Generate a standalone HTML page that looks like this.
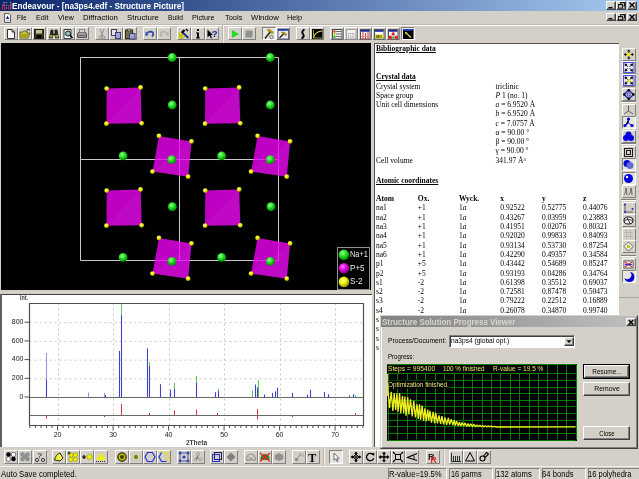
<!DOCTYPE html><html><head><meta charset="utf-8"><style>
html,body{margin:0;padding:0;width:639px;height:479px;overflow:hidden;background:#D4D0C8;position:relative;font-family:"Liberation Sans",sans-serif}
div,svg{position:absolute}
</style></head><body><div style="position:absolute;left:0;top:0;width:639px;height:479px;overflow:hidden;will-change:transform">
<div style="position:absolute;left:0px;top:0px;width:639px;height:11px;background:linear-gradient(to right,#0A246A,#A6CAF0);"></div>
<svg style="position:absolute;left:1px;top:0px" width="11" height="11" viewBox="0 0 11 11"><path d="M1.5 10 V4 M3.5 10 V2 M7.5 10 V5 M10 10 V3" stroke="#D02030" stroke-width="1"/><g fill="#40B0E0"><circle cx="2.8" cy="2.5" r="0.7"/><circle cx="5.5" cy="2.5" r="0.7"/><circle cx="9.5" cy="2.5" r="0.7"/><circle cx="2.8" cy="5.3" r="0.7"/><circle cx="5.5" cy="5.3" r="0.7"/><circle cx="9.5" cy="5.3" r="0.7"/><circle cx="5.5" cy="8" r="0.7"/><circle cx="9.5" cy="8" r="0.7"/></g></svg>
<div style="position:absolute;left:12.30px;top:1.14px;font-family:'Liberation Sans';font-size:8.4px;line-height:10.50px;font-weight:bold;color:#fff;white-space:nowrap;transform:scaleX(0.980);transform-origin:0 50%;">Endeavour - [na3ps4.edf - Structure Picture]</div>
<div style="position:absolute;left:606px;top:1px;width:9.5px;height:9px;background:#D4D0C8;box-sizing:border-box;border-top:1px solid #fff;border-left:1px solid #fff;border-right:1px solid #404040;border-bottom:1px solid #404040;box-shadow:inset -1px -1px 0 #808080;"></div>
<div style="position:absolute;left:615.5px;top:1px;width:10px;height:9px;background:#D4D0C8;box-sizing:border-box;border-top:1px solid #fff;border-left:1px solid #fff;border-right:1px solid #404040;border-bottom:1px solid #404040;box-shadow:inset -1px -1px 0 #808080;"></div>
<div style="position:absolute;left:627px;top:1px;width:10px;height:9px;background:#D4D0C8;box-sizing:border-box;border-top:1px solid #fff;border-left:1px solid #fff;border-right:1px solid #404040;border-bottom:1px solid #404040;box-shadow:inset -1px -1px 0 #808080;"></div>
<svg style="position:absolute;left:606px;top:1px" width="10" height="9" viewBox="0 0 10 9"><rect x="2.5" y="6" width="4" height="1.3" fill="#000"/></svg>
<svg style="position:absolute;left:615.5px;top:1px" width="10" height="9" viewBox="0 0 10 9"><path d="M4.5 3 V1.5 H8.5 V5 H7" fill="none" stroke="#000" stroke-width="0.8"/><rect x="2.5" y="3.5" width="4" height="3.5" fill="none" stroke="#000" stroke-width="0.8"/><path d="M2.5 3.8 H6.5 M4.5 1.8 H8.5" stroke="#000" stroke-width="0.8"/></svg>
<svg style="position:absolute;left:627px;top:1px" width="10" height="9" viewBox="0 0 10 9"><path d="M2.5 1.5 L7.5 6.5 M7.5 1.5 L2.5 6.5" stroke="#000" stroke-width="1.25"/></svg>
<svg style="position:absolute;left:3px;top:12px" width="9" height="12" viewBox="0 0 9 12"><path d="M1.5 1.5 H6 L7.5 3 V10.5 H1.5 Z" fill="#F4F4F4" stroke="#505050" stroke-width="0.9"/><path d="M2.8 7 L4.5 3.8 L6.2 7 Z" fill="#1020A0"/><rect x="2.5" y="8" width="4" height="1.5" fill="#C8C8D0"/></svg>
<div style="position:absolute;left:17.10px;top:12.53px;font-family:'Liberation Sans';font-size:8px;line-height:10.00px;font-weight:normal;color:#000;white-space:nowrap;transform:scaleX(0.729);transform-origin:0 50%;">File</div>
<div style="position:absolute;left:35.90px;top:12.53px;font-family:'Liberation Sans';font-size:8px;line-height:10.00px;font-weight:normal;color:#000;white-space:nowrap;transform:scaleX(0.913);transform-origin:0 50%;">Edit</div>
<div style="position:absolute;left:57.90px;top:12.53px;font-family:'Liberation Sans';font-size:8px;line-height:10.00px;font-weight:normal;color:#000;white-space:nowrap;transform:scaleX(0.924);transform-origin:0 50%;">View</div>
<div style="position:absolute;left:83.20px;top:12.53px;font-family:'Liberation Sans';font-size:8px;line-height:10.00px;font-weight:normal;color:#000;white-space:nowrap;transform:scaleX(0.970);transform-origin:0 50%;">Diffraction</div>
<div style="position:absolute;left:126.60px;top:12.53px;font-family:'Liberation Sans';font-size:8px;line-height:10.00px;font-weight:normal;color:#000;white-space:nowrap;transform:scaleX(0.982);transform-origin:0 50%;">Structure</div>
<div style="position:absolute;left:167.90px;top:12.53px;font-family:'Liberation Sans';font-size:8px;line-height:10.00px;font-weight:normal;color:#000;white-space:nowrap;transform:scaleX(0.843);transform-origin:0 50%;">Build</div>
<div style="position:absolute;left:192.30px;top:12.53px;font-family:'Liberation Sans';font-size:8px;line-height:10.00px;font-weight:normal;color:#000;white-space:nowrap;transform:scaleX(0.903);transform-origin:0 50%;">Picture</div>
<div style="position:absolute;left:224.80px;top:12.53px;font-family:'Liberation Sans';font-size:8px;line-height:10.00px;font-weight:normal;color:#000;white-space:nowrap;transform:scaleX(0.931);transform-origin:0 50%;">Tools</div>
<div style="position:absolute;left:251.00px;top:12.53px;font-family:'Liberation Sans';font-size:8px;line-height:10.00px;font-weight:normal;color:#000;white-space:nowrap;transform:scaleX(0.977);transform-origin:0 50%;">Window</div>
<div style="position:absolute;left:287.30px;top:12.53px;font-family:'Liberation Sans';font-size:8px;line-height:10.00px;font-weight:normal;color:#000;white-space:nowrap;transform:scaleX(0.912);transform-origin:0 50%;">Help</div>
<div style="position:absolute;left:606px;top:13px;width:9.5px;height:8px;background:#D4D0C8;box-sizing:border-box;border-top:1px solid #fff;border-left:1px solid #fff;border-right:1px solid #404040;border-bottom:1px solid #404040;box-shadow:inset -1px -1px 0 #808080;"></div>
<div style="position:absolute;left:615.5px;top:13px;width:10px;height:8px;background:#D4D0C8;box-sizing:border-box;border-top:1px solid #fff;border-left:1px solid #fff;border-right:1px solid #404040;border-bottom:1px solid #404040;box-shadow:inset -1px -1px 0 #808080;"></div>
<div style="position:absolute;left:627px;top:13px;width:10px;height:8px;background:#D4D0C8;box-sizing:border-box;border-top:1px solid #fff;border-left:1px solid #fff;border-right:1px solid #404040;border-bottom:1px solid #404040;box-shadow:inset -1px -1px 0 #808080;"></div>
<svg style="position:absolute;left:606px;top:13px" width="10" height="8" viewBox="0 0 10 8"><rect x="2.5" y="5" width="4" height="1.3" fill="#000"/></svg>
<svg style="position:absolute;left:615.5px;top:13px" width="10" height="8" viewBox="0 0 10 8"><path d="M4.5 3 V1.5 H8.5 V5 H7" fill="none" stroke="#000" stroke-width="0.8"/><rect x="2.5" y="3.5" width="4" height="3.5" fill="none" stroke="#000" stroke-width="0.8"/><path d="M2.5 3.8 H6.5 M4.5 1.8 H8.5" stroke="#000" stroke-width="0.8"/></svg>
<svg style="position:absolute;left:627px;top:13px" width="10" height="8" viewBox="0 0 10 8"><path d="M2.5 1.5 L7.5 6.5 M7.5 1.5 L2.5 6.5" stroke="#000" stroke-width="1.25"/></svg>
<div style="position:absolute;left:0px;top:24px;width:639px;height:1px;background:#BCB8B0;"></div>
<div style="position:absolute;left:0px;top:25px;width:639px;height:1px;background:#fff;"></div>
<div style="position:absolute;left:1px;top:43px;width:370px;height:247px;background:#000;"></div>
<div style="position:absolute;left:0px;top:294px;width:372px;height:153px;background:#fff;"></div>
<div style="position:absolute;left:0px;top:294px;width:372px;height:1px;background:#404040;"></div>
<div style="position:absolute;left:0px;top:294px;width:2px;height:153px;background:#606060;"></div>
<div style="position:absolute;left:375px;top:44px;width:244px;height:403px;background:#fff;"></div>
<div style="position:absolute;left:374px;top:43px;width:1px;height:404px;background:#505050;"></div>
<div style="position:absolute;left:374px;top:43px;width:245px;height:1px;background:#505050;"></div>
<div style="position:absolute;left:4px;top:27px;width:14px;height:13px;background:#D4D0C8;box-sizing:border-box;border-top:1px solid #fff;border-left:1px solid #fff;border-right:1px solid #808080;border-bottom:1px solid #808080;"></div>
<svg style="position:absolute;left:4px;top:27px" width="14" height="13" viewBox="0 0 14 13"><path d="M3.5 2.5 H8 L10.5 5 V11.5 H3.5 Z" fill="#fff" stroke="#303030"/><path d="M8 2.5 V5 H10.5" fill="none" stroke="#303030"/></svg>
<div style="position:absolute;left:18px;top:27px;width:14px;height:13px;background:#D4D0C8;box-sizing:border-box;border-top:1px solid #fff;border-left:1px solid #fff;border-right:1px solid #808080;border-bottom:1px solid #808080;"></div>
<svg style="position:absolute;left:18px;top:27px" width="14" height="13" viewBox="0 0 14 13"><path d="M2 5 H5 L6 4 H9 V6 H12 L10 11 H2 Z" fill="#C8C040" stroke="#505010" stroke-width="0.8"/><path d="M2 11 L4 7 H12 L10 11 Z" fill="#A8A020"/><path d="M9 3 Q11 1.5 12 3.5" fill="none" stroke="#000" stroke-width="1"/></svg>
<div style="position:absolute;left:32px;top:27px;width:14px;height:13px;background:#D4D0C8;box-sizing:border-box;border-top:1px solid #fff;border-left:1px solid #fff;border-right:1px solid #808080;border-bottom:1px solid #808080;"></div>
<svg style="position:absolute;left:32px;top:27px" width="14" height="13" viewBox="0 0 14 13"><rect x="2.5" y="2.5" width="9" height="9" fill="#404020" stroke="#202000"/><rect x="4" y="3" width="6" height="3.5" fill="#C0C0A0"/><rect x="4.5" y="8" width="5" height="3" fill="#000"/></svg>
<div style="position:absolute;left:47px;top:27px;width:14px;height:13px;background:#D4D0C8;box-sizing:border-box;border-top:1px solid #fff;border-left:1px solid #fff;border-right:1px solid #808080;border-bottom:1px solid #808080;"></div>
<svg style="position:absolute;left:47px;top:27px" width="14" height="13" viewBox="0 0 14 13"><path d="M2.5 11 L4 3 H6 V7 H8 V3 H10 L11.5 11 H8.5 V8 H5.5 V11 Z" fill="#303010" stroke="#000" stroke-width="0.6"/><rect x="3" y="8" width="2.5" height="2.5" fill="#A0A040"/><rect x="8.5" y="8" width="2.5" height="2.5" fill="#A0A040"/></svg>
<div style="position:absolute;left:61px;top:27px;width:14px;height:13px;background:#D4D0C8;box-sizing:border-box;border-top:1px solid #fff;border-left:1px solid #fff;border-right:1px solid #808080;border-bottom:1px solid #808080;"></div>
<svg style="position:absolute;left:61px;top:27px" width="14" height="13" viewBox="0 0 14 13"><path d="M3 2.5 H10 V11.5 H3 Z" fill="#fff" stroke="#404040"/><circle cx="7" cy="6.5" r="2.6" fill="#80C0C0" stroke="#202020"/><path d="M8.8 8.3 L11.5 11" stroke="#000" stroke-width="1.4"/></svg>
<div style="position:absolute;left:75px;top:27px;width:14px;height:13px;background:#D4D0C8;box-sizing:border-box;border-top:1px solid #fff;border-left:1px solid #fff;border-right:1px solid #808080;border-bottom:1px solid #808080;"></div>
<svg style="position:absolute;left:75px;top:27px" width="14" height="13" viewBox="0 0 14 13"><path d="M2.5 7 L4 5 H10 L11.5 7 V10.5 H2.5 Z" fill="#A0A0A0" stroke="#505050"/><rect x="4.5" y="2.5" width="5" height="3" fill="#D0D0D0" stroke="#606060" stroke-width="0.6"/><rect x="3.5" y="8" width="7" height="1" fill="#606060"/></svg>
<div style="position:absolute;left:95px;top:27px;width:14px;height:13px;background:#D4D0C8;box-sizing:border-box;border-top:1px solid #fff;border-left:1px solid #fff;border-right:1px solid #808080;border-bottom:1px solid #808080;"></div>
<svg style="position:absolute;left:95px;top:27px" width="14" height="13" viewBox="0 0 14 13"><path d="M5 2 L8 9 M9 2 L6 9" stroke="#909090" stroke-width="1"/><circle cx="5.5" cy="10.5" r="1.5" fill="none" stroke="#909090"/><circle cx="8.5" cy="10.5" r="1.5" fill="none" stroke="#909090"/></svg>
<div style="position:absolute;left:109px;top:27px;width:14px;height:13px;background:#D4D0C8;box-sizing:border-box;border-top:1px solid #fff;border-left:1px solid #fff;border-right:1px solid #808080;border-bottom:1px solid #808080;"></div>
<svg style="position:absolute;left:109px;top:27px" width="14" height="13" viewBox="0 0 14 13"><rect x="2.5" y="2.5" width="5" height="6" fill="#E0E0F0" stroke="#404060"/><rect x="6.5" y="5.5" width="5" height="6" fill="#A0A0E0" stroke="#404060"/></svg>
<div style="position:absolute;left:123px;top:27px;width:14px;height:13px;background:#D4D0C8;box-sizing:border-box;border-top:1px solid #fff;border-left:1px solid #fff;border-right:1px solid #808080;border-bottom:1px solid #808080;"></div>
<svg style="position:absolute;left:123px;top:27px" width="14" height="13" viewBox="0 0 14 13"><rect x="2.5" y="3" width="7" height="8.5" fill="#707040" stroke="#303010"/><rect x="4.5" y="2" width="3" height="2" fill="#C0C0C0" stroke="#303030" stroke-width="0.6"/><rect x="6.5" y="6.5" width="5.5" height="5.5" fill="#A0A0E0" stroke="#404060"/></svg>
<div style="position:absolute;left:143px;top:27px;width:14px;height:13px;background:#D4D0C8;box-sizing:border-box;border-top:1px solid #fff;border-left:1px solid #fff;border-right:1px solid #808080;border-bottom:1px solid #808080;"></div>
<svg style="position:absolute;left:143px;top:27px" width="14" height="13" viewBox="0 0 14 13"><path d="M4 6 Q7 3.5 10 5.5 Q11 7.5 9 9.5" fill="none" stroke="#2040B0" stroke-width="1.6"/><path d="M2.5 4.5 L5.5 8 L2.5 9 Z" fill="#2040B0"/></svg>
<div style="position:absolute;left:157px;top:27px;width:14px;height:13px;background:#D4D0C8;box-sizing:border-box;border-top:1px solid #fff;border-left:1px solid #fff;border-right:1px solid #808080;border-bottom:1px solid #808080;"></div>
<svg style="position:absolute;left:157px;top:27px" width="14" height="13" viewBox="0 0 14 13"><path d="M10 6 Q7 3.5 4 5.5 Q3 7.5 5 9.5" fill="none" stroke="#B0B0B0" stroke-width="1.6"/><path d="M11.5 4.5 L8.5 8 L11.5 9 Z" fill="#B0B0B0"/></svg>
<div style="position:absolute;left:177px;top:27px;width:14px;height:13px;background:#D4D0C8;box-sizing:border-box;border-top:1px solid #fff;border-left:1px solid #fff;border-right:1px solid #808080;border-bottom:1px solid #808080;"></div>
<svg style="position:absolute;left:177px;top:27px" width="14" height="13" viewBox="0 0 14 13"><path d="M5 5 L11.5 11" stroke="#1020A0" stroke-width="1.8"/><path d="M6.5 2.5 L4 5 L5.5 6.5 L8.5 3.5 Z" fill="#000"/><path d="M9 2 L11 4" stroke="#000" stroke-width="1.2"/><circle cx="3.5" cy="7" r="1.6" fill="#E8E800" stroke="#707000" stroke-width="0.4"/><circle cx="3.5" cy="10.3" r="1.6" fill="#E8E800" stroke="#707000" stroke-width="0.4"/><circle cx="6.3" cy="9.3" r="1.5" fill="#E8E800" stroke="#707000" stroke-width="0.4"/></svg>
<div style="position:absolute;left:191px;top:27px;width:14px;height:13px;background:#D4D0C8;box-sizing:border-box;border-top:1px solid #fff;border-left:1px solid #fff;border-right:1px solid #808080;border-bottom:1px solid #808080;"></div>
<svg style="position:absolute;left:191px;top:27px" width="14" height="13" viewBox="0 0 14 13"><rect x="6" y="2" width="2" height="2" fill="#000"/><path d="M5 5.5 H8 V10.5 H9 V11.5 H5 V10.5 H6 V6.5 H5 Z" fill="#000"/></svg>
<div style="position:absolute;left:205px;top:27px;width:14px;height:13px;background:#D4D0C8;box-sizing:border-box;border-top:1px solid #fff;border-left:1px solid #fff;border-right:1px solid #808080;border-bottom:1px solid #808080;"></div>
<svg style="position:absolute;left:205px;top:27px" width="14" height="13" viewBox="0 0 14 13"><path d="M2.5 2.5 V10.5 L4.5 8.5 L6 11.5 L7 11 L5.7 8 H8 Z" fill="#000"/><text x="6.8" y="9.5" font-family="Liberation Sans" font-weight="bold" font-size="9.5" fill="#1020A0">?</text></svg>
<div style="position:absolute;left:228px;top:27px;width:14px;height:13px;background:#D4D0C8;box-sizing:border-box;border-top:1px solid #fff;border-left:1px solid #fff;border-right:1px solid #808080;border-bottom:1px solid #808080;"></div>
<svg style="position:absolute;left:228px;top:27px" width="14" height="13" viewBox="0 0 14 13"><path d="M4 3 L11 7 L4 11 Z" fill="#20E020"/></svg>
<div style="position:absolute;left:242px;top:27px;width:14px;height:13px;background:#D4D0C8;box-sizing:border-box;border-top:1px solid #fff;border-left:1px solid #fff;border-right:1px solid #808080;border-bottom:1px solid #808080;"></div>
<svg style="position:absolute;left:242px;top:27px" width="14" height="13" viewBox="0 0 14 13"><rect x="3.5" y="3.5" width="7" height="7" fill="#909090"/></svg>
<div style="position:absolute;left:276px;top:27px;width:14px;height:13px;background:#D4D0C8;box-sizing:border-box;border-top:1px solid #fff;border-left:1px solid #fff;border-right:1px solid #808080;border-bottom:1px solid #808080;"></div>
<svg style="position:absolute;left:276px;top:27px" width="14" height="13" viewBox="0 0 14 13"><rect x="2" y="2" width="10.5" height="10" fill="#E8E8F0" stroke="#404060" stroke-width="0.8"/><rect x="2" y="2" width="10.5" height="1.8" fill="#2040A0"/><path d="M3.5 11 L8.5 6" stroke="#301808" stroke-width="1.3"/><path d="M5.5 5 Q8.5 4.5 11 7.5 L9.5 8.5 Q8 6.5 6 6 Z" fill="#D0B000" stroke="#605000" stroke-width="0.5"/></svg>
<div style="position:absolute;left:296px;top:27px;width:14px;height:13px;background:#D4D0C8;box-sizing:border-box;border-top:1px solid #fff;border-left:1px solid #fff;border-right:1px solid #808080;border-bottom:1px solid #808080;"></div>
<svg style="position:absolute;left:296px;top:27px" width="14" height="13" viewBox="0 0 14 13"><path d="M8.5 2.5 Q5 4.5 7 7 Q9 9.5 5.5 11.5" fill="none" stroke="#000" stroke-width="2"/></svg>
<div style="position:absolute;left:310px;top:27px;width:14px;height:13px;background:#D4D0C8;box-sizing:border-box;border-top:1px solid #fff;border-left:1px solid #fff;border-right:1px solid #808080;border-bottom:1px solid #808080;"></div>
<svg style="position:absolute;left:310px;top:27px" width="14" height="13" viewBox="0 0 14 13"><rect x="2" y="2" width="10.5" height="10" fill="#000"/><path d="M3.5 11 Q4.5 5 12 4" fill="none" stroke="#E0E040" stroke-width="1.1"/><path d="M3.5 3 V11 H12" fill="none" stroke="#C0C040" stroke-width="0.8"/></svg>
<div style="position:absolute;left:330px;top:27px;width:14px;height:13px;background:#D4D0C8;box-sizing:border-box;border-top:1px solid #fff;border-left:1px solid #fff;border-right:1px solid #808080;border-bottom:1px solid #808080;"></div>
<svg style="position:absolute;left:330px;top:27px" width="14" height="13" viewBox="0 0 14 13"><rect x="2.5" y="2.5" width="9.5" height="9.5" fill="#F0F0F0" stroke="#505050"/><rect x="3.5" y="3.5" width="2" height="2" fill="#E02020"/><rect x="3.5" y="6" width="2" height="2" fill="#E0C020"/><rect x="3.5" y="8.5" width="2" height="2.5" fill="#20C020"/><path d="M6 4.5 H11.5 M6 7 H11.5 M6 9.5 H11.5" stroke="#707070" stroke-width="1"/></svg>
<div style="position:absolute;left:344px;top:27px;width:14px;height:13px;background:#D4D0C8;box-sizing:border-box;border-top:1px solid #fff;border-left:1px solid #fff;border-right:1px solid #808080;border-bottom:1px solid #808080;"></div>
<svg style="position:absolute;left:344px;top:27px" width="14" height="13" viewBox="0 0 14 13"><rect x="2.5" y="2.5" width="9.5" height="9.5" fill="#F4F4F4" stroke="#A0A0A0"/><path d="M4.5 11 V6.5 H10 V11 M6.3 11 V8 M8.2 11 V8" fill="none" stroke="#B8B8B8" stroke-width="1"/></svg>
<div style="position:absolute;left:358px;top:27px;width:14px;height:13px;background:#D4D0C8;box-sizing:border-box;border-top:1px solid #fff;border-left:1px solid #fff;border-right:1px solid #808080;border-bottom:1px solid #808080;"></div>
<svg style="position:absolute;left:358px;top:27px" width="14" height="13" viewBox="0 0 14 13"><rect x="2.5" y="2.5" width="9.5" height="9.5" fill="#fff" stroke="#505050"/><rect x="3" y="3" width="8.5" height="1.8" fill="#2030A0"/><path d="M5 5 V12 M7.5 6 V12 M10 5 V12" stroke="#E04040" stroke-width="1.1"/><path d="M3 9.5 H11.5" stroke="#E08080" stroke-width="0.8"/></svg>
<div style="position:absolute;left:372px;top:27px;width:14px;height:13px;background:#D4D0C8;box-sizing:border-box;border-top:1px solid #fff;border-left:1px solid #fff;border-right:1px solid #808080;border-bottom:1px solid #808080;"></div>
<svg style="position:absolute;left:372px;top:27px" width="14" height="13" viewBox="0 0 14 13"><rect x="2.5" y="2.5" width="9.5" height="9.5" fill="#fff" stroke="#505050"/><rect x="3" y="3" width="8.5" height="1.8" fill="#2030A0"/><rect x="3" y="7.5" width="8.5" height="4" fill="#D8D830"/><text x="4" y="11" font-family="Liberation Sans" font-size="4" font-weight="bold" fill="#404000">Mil</text></svg>
<div style="position:absolute;left:386px;top:27px;width:14px;height:13px;background:#D4D0C8;box-sizing:border-box;border-top:1px solid #fff;border-left:1px solid #fff;border-right:1px solid #808080;border-bottom:1px solid #808080;"></div>
<svg style="position:absolute;left:386px;top:27px" width="14" height="13" viewBox="0 0 14 13"><rect x="2.5" y="2.5" width="9.5" height="9.5" fill="#fff" stroke="#505050"/><rect x="3" y="3" width="8.5" height="1.8" fill="#2030A0"/><circle cx="7.2" cy="7" r="1.7" fill="#E02020"/><circle cx="4.3" cy="10.3" r="1.7" fill="#E02020"/><circle cx="10.2" cy="10.3" r="1.7" fill="#E02020"/><circle cx="7.2" cy="10.3" r="1" fill="#20A020"/></svg>
<div style="position:absolute;left:262px;top:27px;width:14px;height:13px;background:#E8E6E0;box-sizing:border-box;border-top:1px solid #808080;border-left:1px solid #808080;border-right:1px solid #fff;border-bottom:1px solid #fff;"></div>
<svg style="position:absolute;left:262px;top:27px" width="14" height="13" viewBox="0 0 14 13"><path d="M3 11.5 L9 4" stroke="#301808" stroke-width="1.4"/><path d="M5.5 2.5 Q9 2 11.5 5.5 L10 6.5 Q8.5 4.5 6 4 Z" fill="#D0B000" stroke="#605000" stroke-width="0.5"/><circle cx="9.5" cy="10" r="1.7" fill="none" stroke="#505050" stroke-width="0.8"/></svg>
<div style="position:absolute;left:401px;top:27px;width:14px;height:13px;background:#E8E6E0;box-sizing:border-box;border-top:1px solid #808080;border-left:1px solid #808080;border-right:1px solid #fff;border-bottom:1px solid #fff;"></div>
<svg style="position:absolute;left:401px;top:27px" width="14" height="13" viewBox="0 0 14 13"><rect x="2" y="2" width="10.5" height="10" fill="#000"/><rect x="2" y="2" width="10.5" height="1.8" fill="#2040C0"/><path d="M4.5 5.5 L10 10.5" stroke="#D8D840" stroke-width="1.2"/><path d="M4 5 L6.5 5.5 L4.5 7.5 Z" fill="#D8D840"/></svg>
<div style="position:absolute;left:222px;top:25px;width:1px;height:18px;background:#BCB8B0;"></div>
<div style="position:absolute;left:223px;top:25px;width:1px;height:18px;background:#F2F0EC;"></div>
<svg style="position:absolute;left:1px;top:43px" width="370" height="247" viewBox="0 0 370 247"><defs><radialGradient id="gG" cx="40%" cy="35%" r="65%"><stop offset="0" stop-color="#A0FFA0"/><stop offset="0.5" stop-color="#20DC20"/><stop offset="1" stop-color="#008C00"/></radialGradient><radialGradient id="yG" cx="40%" cy="35%" r="65%"><stop offset="0" stop-color="#FFFFA0"/><stop offset="0.5" stop-color="#F0F000"/><stop offset="1" stop-color="#909000"/></radialGradient><radialGradient id="mG" cx="40%" cy="35%" r="65%"><stop offset="0" stop-color="#FF80FF"/><stop offset="0.5" stop-color="#E000E0"/><stop offset="1" stop-color="#800080"/></radialGradient></defs><line x1="79.5" y1="14.5" x2="277.5" y2="14.5" stroke="#C8C8C8" stroke-width="1"/><line x1="79.5" y1="217.5" x2="277.5" y2="217.5" stroke="#C8C8C8" stroke-width="1"/><line x1="79.5" y1="14.5" x2="79.5" y2="217.5" stroke="#C8C8C8" stroke-width="1"/><line x1="277.5" y1="14.5" x2="277.5" y2="217.5" stroke="#C8C8C8" stroke-width="1"/><line x1="178.5" y1="14.5" x2="178.5" y2="217.5" stroke="#C8C8C8" stroke-width="1"/><line x1="79.5" y1="116.5" x2="277.5" y2="116.5" stroke="#C8C8C8" stroke-width="1"/><polygon points="105.7,45.6 139.6,44.5 140.7,80.3 105.5,80.7" fill="#EE00F4" fill-opacity="0.8"/><polygon points="139.6,44.5 140.7,80.3 105.5,80.7" fill="#FFFFFF" fill-opacity="0.035"/><circle cx="105.7" cy="45.6" r="2.4" fill="url(#yG)"/><circle cx="139.6" cy="44.5" r="2.4" fill="url(#yG)"/><circle cx="140.7" cy="80.3" r="2.4" fill="url(#yG)"/><circle cx="105.5" cy="80.7" r="2.4" fill="url(#yG)"/><polygon points="204.3,45.6 238.2,44.5 239.3,80.3 204.1,80.7" fill="#EE00F4" fill-opacity="0.8"/><polygon points="238.2,44.5 239.3,80.3 204.1,80.7" fill="#FFFFFF" fill-opacity="0.035"/><circle cx="204.3" cy="45.6" r="2.4" fill="url(#yG)"/><circle cx="238.2" cy="44.5" r="2.4" fill="url(#yG)"/><circle cx="239.3" cy="80.3" r="2.4" fill="url(#yG)"/><circle cx="204.1" cy="80.7" r="2.4" fill="url(#yG)"/><polygon points="105.7,147.6 139.6,146.5 140.7,182.3 105.5,182.7" fill="#EE00F4" fill-opacity="0.8"/><polygon points="139.6,146.5 140.7,182.3 105.5,182.7" fill="#FFFFFF" fill-opacity="0.035"/><circle cx="105.7" cy="147.6" r="2.4" fill="url(#yG)"/><circle cx="139.6" cy="146.5" r="2.4" fill="url(#yG)"/><circle cx="140.7" cy="182.3" r="2.4" fill="url(#yG)"/><circle cx="105.5" cy="182.7" r="2.4" fill="url(#yG)"/><polygon points="204.3,147.6 238.2,146.5 239.3,182.3 204.1,182.7" fill="#EE00F4" fill-opacity="0.8"/><polygon points="238.2,146.5 239.3,182.3 204.1,182.7" fill="#FFFFFF" fill-opacity="0.035"/><circle cx="204.3" cy="147.6" r="2.4" fill="url(#yG)"/><circle cx="238.2" cy="146.5" r="2.4" fill="url(#yG)"/><circle cx="239.3" cy="182.3" r="2.4" fill="url(#yG)"/><circle cx="204.1" cy="182.7" r="2.4" fill="url(#yG)"/><polygon points="158.0,92.9 190.5,98.4 187.2,133.7 151.5,128.6" fill="#EE00F4" fill-opacity="0.8"/><polygon points="190.5,98.4 187.2,133.7 151.5,128.6" fill="#FFFFFF" fill-opacity="0.035"/><circle cx="158.0" cy="92.9" r="2.4" fill="url(#yG)"/><circle cx="190.5" cy="98.4" r="2.4" fill="url(#yG)"/><circle cx="187.2" cy="133.7" r="2.4" fill="url(#yG)"/><circle cx="151.5" cy="128.6" r="2.4" fill="url(#yG)"/><polygon points="256.6,92.9 289.1,98.4 285.8,133.7 250.1,128.6" fill="#EE00F4" fill-opacity="0.8"/><polygon points="289.1,98.4 285.8,133.7 250.1,128.6" fill="#FFFFFF" fill-opacity="0.035"/><circle cx="256.6" cy="92.9" r="2.4" fill="url(#yG)"/><circle cx="289.1" cy="98.4" r="2.4" fill="url(#yG)"/><circle cx="285.8" cy="133.7" r="2.4" fill="url(#yG)"/><circle cx="250.1" cy="128.6" r="2.4" fill="url(#yG)"/><polygon points="158.0,194.9 190.5,200.4 187.2,235.7 151.5,230.6" fill="#EE00F4" fill-opacity="0.8"/><polygon points="190.5,200.4 187.2,235.7 151.5,230.6" fill="#FFFFFF" fill-opacity="0.035"/><circle cx="158.0" cy="194.9" r="2.4" fill="url(#yG)"/><circle cx="190.5" cy="200.4" r="2.4" fill="url(#yG)"/><circle cx="187.2" cy="235.7" r="2.4" fill="url(#yG)"/><circle cx="151.5" cy="230.6" r="2.4" fill="url(#yG)"/><polygon points="256.6,194.9 289.1,200.4 285.8,235.7 250.1,230.6" fill="#EE00F4" fill-opacity="0.8"/><polygon points="289.1,200.4 285.8,235.7 250.1,230.6" fill="#FFFFFF" fill-opacity="0.035"/><circle cx="256.6" cy="194.9" r="2.4" fill="url(#yG)"/><circle cx="289.1" cy="200.4" r="2.4" fill="url(#yG)"/><circle cx="285.8" cy="235.7" r="2.4" fill="url(#yG)"/><circle cx="250.1" cy="230.6" r="2.4" fill="url(#yG)"/><circle cx="171.2" cy="14.5" r="4.4" fill="url(#gG)"/><circle cx="269.3" cy="14.5" r="4.4" fill="url(#gG)"/><circle cx="171.2" cy="62.0" r="4.4" fill="url(#gG)"/><circle cx="269.3" cy="62.0" r="4.4" fill="url(#gG)"/><circle cx="122.1" cy="112.9" r="4.4" fill="url(#gG)"/><circle cx="220.6" cy="112.9" r="4.4" fill="url(#gG)"/><circle cx="170.7" cy="116.6" r="4.4" fill="url(#gG)"/><circle cx="269.3" cy="116.6" r="4.4" fill="url(#gG)"/><circle cx="171.4" cy="163.7" r="4.4" fill="url(#gG)"/><circle cx="270.0" cy="163.7" r="4.4" fill="url(#gG)"/><circle cx="122.1" cy="214.4" r="4.4" fill="url(#gG)"/><circle cx="220.6" cy="214.4" r="4.4" fill="url(#gG)"/><circle cx="170.9" cy="218.3" r="4.4" fill="url(#gG)"/><circle cx="269.3" cy="218.3" r="4.4" fill="url(#gG)"/><rect x="336.5" y="204.5" width="32" height="42" fill="#000" stroke="#909090" stroke-width="1"/><circle cx="342.9" cy="211.8" r="5.3" fill="url(#gG)"/><circle cx="342.9" cy="225.3" r="5.3" fill="url(#mG)"/><circle cx="342.9" cy="238.9" r="5.3" fill="url(#yG)"/></svg>
<div style="position:absolute;left:350.00px;top:250.23px;font-family:'Liberation Sans';font-size:8.2px;line-height:10.25px;font-weight:normal;color:#E8E8E8;white-space:nowrap;transform:scaleX(0.909);transform-origin:0 50%;">Na+1</div>
<div style="position:absolute;left:350.00px;top:263.83px;font-family:'Liberation Sans';font-size:8.2px;line-height:10.25px;font-weight:normal;color:#E8E8E8;white-space:nowrap;transform:scaleX(0.987);transform-origin:0 50%;">P+5</div>
<div style="position:absolute;left:350.00px;top:277.43px;font-family:'Liberation Sans';font-size:8.2px;line-height:10.25px;font-weight:normal;color:#E8E8E8;white-space:nowrap;transform:scaleX(0.988);transform-origin:0 50%;">S-2</div>
<div style="position:absolute;left:376.00px;top:44.08px;font-family:'Liberation Serif';font-size:7.5px;line-height:9.38px;font-weight:bold;color:#000;white-space:nowrap;text-decoration:underline;">Bibliographic data</div>
<div style="position:absolute;left:376.00px;top:72.18px;font-family:'Liberation Serif';font-size:7.5px;line-height:9.38px;font-weight:bold;color:#000;white-space:nowrap;text-decoration:underline;">Crystal data</div>
<div style="position:absolute;left:376.00px;top:81.58px;font-family:'Liberation Serif';font-size:7.5px;line-height:9.38px;font-weight:normal;color:#000;white-space:nowrap;">Crystal system</div>
<div style="position:absolute;left:495.50px;top:81.58px;font-family:'Liberation Serif';font-size:7.5px;line-height:9.38px;font-weight:normal;color:#000;white-space:nowrap;">triclinic</div>
<div style="position:absolute;left:376.00px;top:90.82px;font-family:'Liberation Serif';font-size:7.5px;line-height:9.38px;font-weight:normal;color:#000;white-space:nowrap;">Space group</div>
<div style="position:absolute;left:495.50px;top:90.82px;font-family:'Liberation Serif';font-size:7.5px;line-height:9.38px;font-weight:normal;color:#000;white-space:nowrap;"><i>P</i> 1 (no. 1)</div>
<div style="position:absolute;left:376.00px;top:100.06px;font-family:'Liberation Serif';font-size:7.5px;line-height:9.38px;font-weight:normal;color:#000;white-space:nowrap;">Unit cell dimensions</div>
<div style="position:absolute;left:495.50px;top:100.06px;font-family:'Liberation Serif';font-size:7.5px;line-height:9.38px;font-weight:normal;color:#000;white-space:nowrap;"><i>a</i> = 6.9520 &#197;</div>
<div style="position:absolute;left:495.50px;top:109.30px;font-family:'Liberation Serif';font-size:7.5px;line-height:9.38px;font-weight:normal;color:#000;white-space:nowrap;"><i>b</i> = 6.9520 &#197;</div>
<div style="position:absolute;left:495.50px;top:118.54px;font-family:'Liberation Serif';font-size:7.5px;line-height:9.38px;font-weight:normal;color:#000;white-space:nowrap;"><i>c</i> = 7.0757 &#197;</div>
<div style="position:absolute;left:495.50px;top:127.78px;font-family:'Liberation Serif';font-size:7.5px;line-height:9.38px;font-weight:normal;color:#000;white-space:nowrap;">&#945; = 90.00 &#176;</div>
<div style="position:absolute;left:495.50px;top:137.02px;font-family:'Liberation Serif';font-size:7.5px;line-height:9.38px;font-weight:normal;color:#000;white-space:nowrap;">&#946; = 90.00 &#176;</div>
<div style="position:absolute;left:495.50px;top:146.26px;font-family:'Liberation Serif';font-size:7.5px;line-height:9.38px;font-weight:normal;color:#000;white-space:nowrap;">&#947; = 90.00 &#176;</div>
<div style="position:absolute;left:376.00px;top:155.50px;font-family:'Liberation Serif';font-size:7.5px;line-height:9.38px;font-weight:normal;color:#000;white-space:nowrap;">Cell volume</div>
<div style="position:absolute;left:495.50px;top:155.50px;font-family:'Liberation Serif';font-size:7.5px;line-height:9.38px;font-weight:normal;color:#000;white-space:nowrap;">341.97 &#197;&#179;</div>
<div style="position:absolute;left:376.00px;top:175.58px;font-family:'Liberation Serif';font-size:7.5px;line-height:9.38px;font-weight:bold;color:#000;white-space:nowrap;text-decoration:underline;">Atomic coordinates</div>
<div style="position:absolute;left:376.00px;top:193.98px;font-family:'Liberation Serif';font-size:7.5px;line-height:9.38px;font-weight:bold;color:#000;white-space:nowrap;">Atom</div>
<div style="position:absolute;left:417.80px;top:193.98px;font-family:'Liberation Serif';font-size:7.5px;line-height:9.38px;font-weight:bold;color:#000;white-space:nowrap;">Ox.</div>
<div style="position:absolute;left:458.90px;top:193.98px;font-family:'Liberation Serif';font-size:7.5px;line-height:9.38px;font-weight:bold;color:#000;white-space:nowrap;">Wyck.</div>
<div style="position:absolute;left:500.30px;top:193.98px;font-family:'Liberation Serif';font-size:7.5px;line-height:9.38px;font-weight:bold;color:#000;white-space:nowrap;">x</div>
<div style="position:absolute;left:541.90px;top:193.98px;font-family:'Liberation Serif';font-size:7.5px;line-height:9.38px;font-weight:bold;color:#000;white-space:nowrap;">y</div>
<div style="position:absolute;left:583.10px;top:193.98px;font-family:'Liberation Serif';font-size:7.5px;line-height:9.38px;font-weight:bold;color:#000;white-space:nowrap;">z</div>
<div style="position:absolute;left:376.00px;top:203.48px;font-family:'Liberation Serif';font-size:7.5px;line-height:9.38px;font-weight:normal;color:#000;white-space:nowrap;">na1</div>
<div style="position:absolute;left:417.80px;top:203.48px;font-family:'Liberation Serif';font-size:7.5px;line-height:9.38px;font-weight:normal;color:#000;white-space:nowrap;">+1</div>
<div style="position:absolute;left:458.90px;top:203.48px;font-family:'Liberation Serif';font-size:7.5px;line-height:9.38px;font-weight:normal;color:#000;white-space:nowrap;">1<i>a</i></div>
<div style="position:absolute;left:500.30px;top:203.48px;font-family:'Liberation Serif';font-size:7.5px;line-height:9.38px;font-weight:normal;color:#000;white-space:nowrap;">0.92522</div>
<div style="position:absolute;left:541.90px;top:203.48px;font-family:'Liberation Serif';font-size:7.5px;line-height:9.38px;font-weight:normal;color:#000;white-space:nowrap;">0.52775</div>
<div style="position:absolute;left:583.10px;top:203.48px;font-family:'Liberation Serif';font-size:7.5px;line-height:9.38px;font-weight:normal;color:#000;white-space:nowrap;">0.44076</div>
<div style="position:absolute;left:376.00px;top:212.77px;font-family:'Liberation Serif';font-size:7.5px;line-height:9.38px;font-weight:normal;color:#000;white-space:nowrap;">na2</div>
<div style="position:absolute;left:417.80px;top:212.77px;font-family:'Liberation Serif';font-size:7.5px;line-height:9.38px;font-weight:normal;color:#000;white-space:nowrap;">+1</div>
<div style="position:absolute;left:458.90px;top:212.77px;font-family:'Liberation Serif';font-size:7.5px;line-height:9.38px;font-weight:normal;color:#000;white-space:nowrap;">1<i>a</i></div>
<div style="position:absolute;left:500.30px;top:212.77px;font-family:'Liberation Serif';font-size:7.5px;line-height:9.38px;font-weight:normal;color:#000;white-space:nowrap;">0.43267</div>
<div style="position:absolute;left:541.90px;top:212.77px;font-family:'Liberation Serif';font-size:7.5px;line-height:9.38px;font-weight:normal;color:#000;white-space:nowrap;">0.03959</div>
<div style="position:absolute;left:583.10px;top:212.77px;font-family:'Liberation Serif';font-size:7.5px;line-height:9.38px;font-weight:normal;color:#000;white-space:nowrap;">0.23883</div>
<div style="position:absolute;left:376.00px;top:222.06px;font-family:'Liberation Serif';font-size:7.5px;line-height:9.38px;font-weight:normal;color:#000;white-space:nowrap;">na3</div>
<div style="position:absolute;left:417.80px;top:222.06px;font-family:'Liberation Serif';font-size:7.5px;line-height:9.38px;font-weight:normal;color:#000;white-space:nowrap;">+1</div>
<div style="position:absolute;left:458.90px;top:222.06px;font-family:'Liberation Serif';font-size:7.5px;line-height:9.38px;font-weight:normal;color:#000;white-space:nowrap;">1<i>a</i></div>
<div style="position:absolute;left:500.30px;top:222.06px;font-family:'Liberation Serif';font-size:7.5px;line-height:9.38px;font-weight:normal;color:#000;white-space:nowrap;">0.41951</div>
<div style="position:absolute;left:541.90px;top:222.06px;font-family:'Liberation Serif';font-size:7.5px;line-height:9.38px;font-weight:normal;color:#000;white-space:nowrap;">0.02076</div>
<div style="position:absolute;left:583.10px;top:222.06px;font-family:'Liberation Serif';font-size:7.5px;line-height:9.38px;font-weight:normal;color:#000;white-space:nowrap;">0.80321</div>
<div style="position:absolute;left:376.00px;top:231.35px;font-family:'Liberation Serif';font-size:7.5px;line-height:9.38px;font-weight:normal;color:#000;white-space:nowrap;">na4</div>
<div style="position:absolute;left:417.80px;top:231.35px;font-family:'Liberation Serif';font-size:7.5px;line-height:9.38px;font-weight:normal;color:#000;white-space:nowrap;">+1</div>
<div style="position:absolute;left:458.90px;top:231.35px;font-family:'Liberation Serif';font-size:7.5px;line-height:9.38px;font-weight:normal;color:#000;white-space:nowrap;">1<i>a</i></div>
<div style="position:absolute;left:500.30px;top:231.35px;font-family:'Liberation Serif';font-size:7.5px;line-height:9.38px;font-weight:normal;color:#000;white-space:nowrap;">0.92020</div>
<div style="position:absolute;left:541.90px;top:231.35px;font-family:'Liberation Serif';font-size:7.5px;line-height:9.38px;font-weight:normal;color:#000;white-space:nowrap;">0.99833</div>
<div style="position:absolute;left:583.10px;top:231.35px;font-family:'Liberation Serif';font-size:7.5px;line-height:9.38px;font-weight:normal;color:#000;white-space:nowrap;">0.84093</div>
<div style="position:absolute;left:376.00px;top:240.64px;font-family:'Liberation Serif';font-size:7.5px;line-height:9.38px;font-weight:normal;color:#000;white-space:nowrap;">na5</div>
<div style="position:absolute;left:417.80px;top:240.64px;font-family:'Liberation Serif';font-size:7.5px;line-height:9.38px;font-weight:normal;color:#000;white-space:nowrap;">+1</div>
<div style="position:absolute;left:458.90px;top:240.64px;font-family:'Liberation Serif';font-size:7.5px;line-height:9.38px;font-weight:normal;color:#000;white-space:nowrap;">1<i>a</i></div>
<div style="position:absolute;left:500.30px;top:240.64px;font-family:'Liberation Serif';font-size:7.5px;line-height:9.38px;font-weight:normal;color:#000;white-space:nowrap;">0.93134</div>
<div style="position:absolute;left:541.90px;top:240.64px;font-family:'Liberation Serif';font-size:7.5px;line-height:9.38px;font-weight:normal;color:#000;white-space:nowrap;">0.53730</div>
<div style="position:absolute;left:583.10px;top:240.64px;font-family:'Liberation Serif';font-size:7.5px;line-height:9.38px;font-weight:normal;color:#000;white-space:nowrap;">0.87254</div>
<div style="position:absolute;left:376.00px;top:249.93px;font-family:'Liberation Serif';font-size:7.5px;line-height:9.38px;font-weight:normal;color:#000;white-space:nowrap;">na6</div>
<div style="position:absolute;left:417.80px;top:249.93px;font-family:'Liberation Serif';font-size:7.5px;line-height:9.38px;font-weight:normal;color:#000;white-space:nowrap;">+1</div>
<div style="position:absolute;left:458.90px;top:249.93px;font-family:'Liberation Serif';font-size:7.5px;line-height:9.38px;font-weight:normal;color:#000;white-space:nowrap;">1<i>a</i></div>
<div style="position:absolute;left:500.30px;top:249.93px;font-family:'Liberation Serif';font-size:7.5px;line-height:9.38px;font-weight:normal;color:#000;white-space:nowrap;">0.42290</div>
<div style="position:absolute;left:541.90px;top:249.93px;font-family:'Liberation Serif';font-size:7.5px;line-height:9.38px;font-weight:normal;color:#000;white-space:nowrap;">0.49357</div>
<div style="position:absolute;left:583.10px;top:249.93px;font-family:'Liberation Serif';font-size:7.5px;line-height:9.38px;font-weight:normal;color:#000;white-space:nowrap;">0.34584</div>
<div style="position:absolute;left:376.00px;top:259.22px;font-family:'Liberation Serif';font-size:7.5px;line-height:9.38px;font-weight:normal;color:#000;white-space:nowrap;">p1</div>
<div style="position:absolute;left:417.80px;top:259.22px;font-family:'Liberation Serif';font-size:7.5px;line-height:9.38px;font-weight:normal;color:#000;white-space:nowrap;">+5</div>
<div style="position:absolute;left:458.90px;top:259.22px;font-family:'Liberation Serif';font-size:7.5px;line-height:9.38px;font-weight:normal;color:#000;white-space:nowrap;">1<i>a</i></div>
<div style="position:absolute;left:500.30px;top:259.22px;font-family:'Liberation Serif';font-size:7.5px;line-height:9.38px;font-weight:normal;color:#000;white-space:nowrap;">0.43442</div>
<div style="position:absolute;left:541.90px;top:259.22px;font-family:'Liberation Serif';font-size:7.5px;line-height:9.38px;font-weight:normal;color:#000;white-space:nowrap;">0.54689</div>
<div style="position:absolute;left:583.10px;top:259.22px;font-family:'Liberation Serif';font-size:7.5px;line-height:9.38px;font-weight:normal;color:#000;white-space:nowrap;">0.85247</div>
<div style="position:absolute;left:376.00px;top:268.51px;font-family:'Liberation Serif';font-size:7.5px;line-height:9.38px;font-weight:normal;color:#000;white-space:nowrap;">p2</div>
<div style="position:absolute;left:417.80px;top:268.51px;font-family:'Liberation Serif';font-size:7.5px;line-height:9.38px;font-weight:normal;color:#000;white-space:nowrap;">+5</div>
<div style="position:absolute;left:458.90px;top:268.51px;font-family:'Liberation Serif';font-size:7.5px;line-height:9.38px;font-weight:normal;color:#000;white-space:nowrap;">1<i>a</i></div>
<div style="position:absolute;left:500.30px;top:268.51px;font-family:'Liberation Serif';font-size:7.5px;line-height:9.38px;font-weight:normal;color:#000;white-space:nowrap;">0.93193</div>
<div style="position:absolute;left:541.90px;top:268.51px;font-family:'Liberation Serif';font-size:7.5px;line-height:9.38px;font-weight:normal;color:#000;white-space:nowrap;">0.04286</div>
<div style="position:absolute;left:583.10px;top:268.51px;font-family:'Liberation Serif';font-size:7.5px;line-height:9.38px;font-weight:normal;color:#000;white-space:nowrap;">0.34764</div>
<div style="position:absolute;left:376.00px;top:277.80px;font-family:'Liberation Serif';font-size:7.5px;line-height:9.38px;font-weight:normal;color:#000;white-space:nowrap;">s1</div>
<div style="position:absolute;left:417.80px;top:277.80px;font-family:'Liberation Serif';font-size:7.5px;line-height:9.38px;font-weight:normal;color:#000;white-space:nowrap;">-2</div>
<div style="position:absolute;left:458.90px;top:277.80px;font-family:'Liberation Serif';font-size:7.5px;line-height:9.38px;font-weight:normal;color:#000;white-space:nowrap;">1<i>a</i></div>
<div style="position:absolute;left:500.30px;top:277.80px;font-family:'Liberation Serif';font-size:7.5px;line-height:9.38px;font-weight:normal;color:#000;white-space:nowrap;">0.61398</div>
<div style="position:absolute;left:541.90px;top:277.80px;font-family:'Liberation Serif';font-size:7.5px;line-height:9.38px;font-weight:normal;color:#000;white-space:nowrap;">0.35512</div>
<div style="position:absolute;left:583.10px;top:277.80px;font-family:'Liberation Serif';font-size:7.5px;line-height:9.38px;font-weight:normal;color:#000;white-space:nowrap;">0.69037</div>
<div style="position:absolute;left:376.00px;top:287.09px;font-family:'Liberation Serif';font-size:7.5px;line-height:9.38px;font-weight:normal;color:#000;white-space:nowrap;">s2</div>
<div style="position:absolute;left:417.80px;top:287.09px;font-family:'Liberation Serif';font-size:7.5px;line-height:9.38px;font-weight:normal;color:#000;white-space:nowrap;">-2</div>
<div style="position:absolute;left:458.90px;top:287.09px;font-family:'Liberation Serif';font-size:7.5px;line-height:9.38px;font-weight:normal;color:#000;white-space:nowrap;">1<i>a</i></div>
<div style="position:absolute;left:500.30px;top:287.09px;font-family:'Liberation Serif';font-size:7.5px;line-height:9.38px;font-weight:normal;color:#000;white-space:nowrap;">0.72581</div>
<div style="position:absolute;left:541.90px;top:287.09px;font-family:'Liberation Serif';font-size:7.5px;line-height:9.38px;font-weight:normal;color:#000;white-space:nowrap;">0.87478</div>
<div style="position:absolute;left:583.10px;top:287.09px;font-family:'Liberation Serif';font-size:7.5px;line-height:9.38px;font-weight:normal;color:#000;white-space:nowrap;">0.50473</div>
<div style="position:absolute;left:376.00px;top:296.38px;font-family:'Liberation Serif';font-size:7.5px;line-height:9.38px;font-weight:normal;color:#000;white-space:nowrap;">s3</div>
<div style="position:absolute;left:417.80px;top:296.38px;font-family:'Liberation Serif';font-size:7.5px;line-height:9.38px;font-weight:normal;color:#000;white-space:nowrap;">-2</div>
<div style="position:absolute;left:458.90px;top:296.38px;font-family:'Liberation Serif';font-size:7.5px;line-height:9.38px;font-weight:normal;color:#000;white-space:nowrap;">1<i>a</i></div>
<div style="position:absolute;left:500.30px;top:296.38px;font-family:'Liberation Serif';font-size:7.5px;line-height:9.38px;font-weight:normal;color:#000;white-space:nowrap;">0.79222</div>
<div style="position:absolute;left:541.90px;top:296.38px;font-family:'Liberation Serif';font-size:7.5px;line-height:9.38px;font-weight:normal;color:#000;white-space:nowrap;">0.22512</div>
<div style="position:absolute;left:583.10px;top:296.38px;font-family:'Liberation Serif';font-size:7.5px;line-height:9.38px;font-weight:normal;color:#000;white-space:nowrap;">0.16889</div>
<div style="position:absolute;left:376.00px;top:305.67px;font-family:'Liberation Serif';font-size:7.5px;line-height:9.38px;font-weight:normal;color:#000;white-space:nowrap;">s4</div>
<div style="position:absolute;left:417.80px;top:305.67px;font-family:'Liberation Serif';font-size:7.5px;line-height:9.38px;font-weight:normal;color:#000;white-space:nowrap;">-2</div>
<div style="position:absolute;left:458.90px;top:305.67px;font-family:'Liberation Serif';font-size:7.5px;line-height:9.38px;font-weight:normal;color:#000;white-space:nowrap;">1<i>a</i></div>
<div style="position:absolute;left:500.30px;top:305.67px;font-family:'Liberation Serif';font-size:7.5px;line-height:9.38px;font-weight:normal;color:#000;white-space:nowrap;">0.26078</div>
<div style="position:absolute;left:541.90px;top:305.67px;font-family:'Liberation Serif';font-size:7.5px;line-height:9.38px;font-weight:normal;color:#000;white-space:nowrap;">0.34870</div>
<div style="position:absolute;left:583.10px;top:305.67px;font-family:'Liberation Serif';font-size:7.5px;line-height:9.38px;font-weight:normal;color:#000;white-space:nowrap;">0.99740</div>
<div style="position:absolute;left:376.00px;top:314.96px;font-family:'Liberation Serif';font-size:7.5px;line-height:9.38px;font-weight:normal;color:#000;white-space:nowrap;">s</div>
<div style="position:absolute;left:376.00px;top:324.25px;font-family:'Liberation Serif';font-size:7.5px;line-height:9.38px;font-weight:normal;color:#000;white-space:nowrap;">s</div>
<div style="position:absolute;left:376.00px;top:333.54px;font-family:'Liberation Serif';font-size:7.5px;line-height:9.38px;font-weight:normal;color:#000;white-space:nowrap;">s</div>
<div style="position:absolute;left:376.00px;top:342.83px;font-family:'Liberation Serif';font-size:7.5px;line-height:9.38px;font-weight:normal;color:#000;white-space:nowrap;">s</div>
<svg style="position:absolute;left:0px;top:0px" width="372" height="479" viewBox="0 0 372 479"><line x1="29.5" y1="378.8" x2="363.5" y2="378.8" stroke="#C8C8C8" stroke-width="1" stroke-dasharray="2,3"/><line x1="29.5" y1="360.1" x2="363.5" y2="360.1" stroke="#C8C8C8" stroke-width="1" stroke-dasharray="2,3"/><line x1="29.5" y1="341.4" x2="363.5" y2="341.4" stroke="#C8C8C8" stroke-width="1" stroke-dasharray="2,3"/><line x1="29.5" y1="322.7" x2="363.5" y2="322.7" stroke="#C8C8C8" stroke-width="1" stroke-dasharray="2,3"/><line x1="58.5" y1="303.5" x2="58.5" y2="425.5" stroke="#C8C8C8" stroke-width="1" stroke-dasharray="2,3"/><line x1="113.5" y1="303.5" x2="113.5" y2="425.5" stroke="#C8C8C8" stroke-width="1" stroke-dasharray="2,3"/><line x1="169.5" y1="303.5" x2="169.5" y2="425.5" stroke="#C8C8C8" stroke-width="1" stroke-dasharray="2,3"/><line x1="224.5" y1="303.5" x2="224.5" y2="425.5" stroke="#C8C8C8" stroke-width="1" stroke-dasharray="2,3"/><line x1="280.5" y1="303.5" x2="280.5" y2="425.5" stroke="#C8C8C8" stroke-width="1" stroke-dasharray="2,3"/><line x1="335.5" y1="303.5" x2="335.5" y2="425.5" stroke="#C8C8C8" stroke-width="1" stroke-dasharray="2,3"/><line x1="46.5" y1="353" x2="46.5" y2="379.7" stroke="#9090E0" stroke-width="1"/><line x1="46.5" y1="379.7" x2="46.5" y2="397" stroke="#4040C8" stroke-width="1.1"/><line x1="88.5" y1="392.5" x2="88.5" y2="397" stroke="#9090E0" stroke-width="1"/><line x1="88.5" y1="397" x2="88.5" y2="397" stroke="#4040C8" stroke-width="1.1"/><line x1="104.5" y1="392.8" x2="104.5" y2="397" stroke="#9090E0" stroke-width="1"/><line x1="104.5" y1="397" x2="104.5" y2="397" stroke="#4040C8" stroke-width="1.1"/><line x1="105.5" y1="395" x2="105.5" y2="397" stroke="#4040C8" stroke-width="1.1"/><line x1="119.5" y1="350.9" x2="119.5" y2="397" stroke="#4040C8" stroke-width="1.1"/><line x1="121.5" y1="303.7" x2="121.5" y2="315.2" stroke="#50D050" stroke-width="1"/><line x1="121.5" y1="315.2" x2="121.5" y2="397" stroke="#4040C8" stroke-width="1.1"/><line x1="147.5" y1="348.3" x2="147.5" y2="397" stroke="#4040C8" stroke-width="1.1"/><line x1="149.5" y1="362.1" x2="149.5" y2="365.8" stroke="#50D050" stroke-width="1"/><line x1="149.5" y1="365.8" x2="149.5" y2="397" stroke="#4040C8" stroke-width="1.1"/><line x1="160.5" y1="384.2" x2="160.5" y2="397" stroke="#4040C8" stroke-width="1.1"/><line x1="170.5" y1="389.7" x2="170.5" y2="397" stroke="#4040C8" stroke-width="1.1"/><line x1="174.5" y1="382.9" x2="174.5" y2="388.7" stroke="#50D050" stroke-width="1"/><line x1="174.5" y1="388.7" x2="174.5" y2="397" stroke="#4040C8" stroke-width="1.1"/><line x1="196.5" y1="375.9" x2="196.5" y2="382.6" stroke="#50D050" stroke-width="1"/><line x1="196.5" y1="382.6" x2="196.5" y2="397" stroke="#4040C8" stroke-width="1.1"/><line x1="215.5" y1="392.2" x2="215.5" y2="397" stroke="#4040C8" stroke-width="1.1"/><line x1="218.5" y1="388.7" x2="218.5" y2="390.9" stroke="#50D050" stroke-width="1"/><line x1="218.5" y1="390.9" x2="218.5" y2="397" stroke="#4040C8" stroke-width="1.1"/><line x1="252.5" y1="390.3" x2="252.5" y2="397" stroke="#50D050" stroke-width="1"/><line x1="252.5" y1="397" x2="252.5" y2="397" stroke="#4040C8" stroke-width="1.1"/><line x1="255.5" y1="384.5" x2="255.5" y2="397" stroke="#4040C8" stroke-width="1.1"/><line x1="257.5" y1="387.4" x2="257.5" y2="397" stroke="#4040C8" stroke-width="1.1"/><line x1="258.5" y1="380.2" x2="258.5" y2="397" stroke="#50D050" stroke-width="1"/><line x1="258.5" y1="397" x2="258.5" y2="397" stroke="#4040C8" stroke-width="1.1"/><line x1="264.5" y1="394.5" x2="264.5" y2="397" stroke="#4040C8" stroke-width="1.1"/><line x1="272.5" y1="392.9" x2="272.5" y2="397" stroke="#4040C8" stroke-width="1.1"/><line x1="275.5" y1="391.3" x2="275.5" y2="397" stroke="#4040C8" stroke-width="1.1"/><line x1="277.5" y1="387.8" x2="277.5" y2="397" stroke="#4040C8" stroke-width="1.1"/><line x1="292.5" y1="392.9" x2="292.5" y2="397" stroke="#4040C8" stroke-width="1.1"/><line x1="307.5" y1="394.5" x2="307.5" y2="397" stroke="#4040C8" stroke-width="1.1"/><line x1="310.5" y1="389.7" x2="310.5" y2="397" stroke="#4040C8" stroke-width="1.1"/><line x1="324.5" y1="391.9" x2="324.5" y2="397" stroke="#4040C8" stroke-width="1.1"/><line x1="328.5" y1="394.2" x2="328.5" y2="397" stroke="#4040C8" stroke-width="1.1"/><line x1="349.5" y1="395.5" x2="349.5" y2="397" stroke="#4040C8" stroke-width="1.1"/><line x1="353.5" y1="394.2" x2="353.5" y2="397" stroke="#4040C8" stroke-width="1.1"/><line x1="355.5" y1="395" x2="355.5" y2="397" stroke="#50D050" stroke-width="1"/><line x1="355.5" y1="397" x2="355.5" y2="397" stroke="#4040C8" stroke-width="1.1"/><line x1="46.5" y1="415.5" x2="46.5" y2="418.7" stroke="#E03040" stroke-width="1"/><line x1="121.5" y1="404.1" x2="121.5" y2="415.5" stroke="#E03040" stroke-width="1"/><line x1="174.5" y1="410.4" x2="174.5" y2="415.5" stroke="#E03040" stroke-width="1"/><line x1="196.5" y1="409.6" x2="196.5" y2="415.5" stroke="#E03040" stroke-width="1"/><line x1="217.5" y1="413" x2="217.5" y2="415.5" stroke="#E03040" stroke-width="1"/><line x1="104.5" y1="415.5" x2="104.5" y2="417" stroke="#E03040" stroke-width="1"/><line x1="149.5" y1="413" x2="149.5" y2="415.5" stroke="#E03040" stroke-width="1"/><line x1="257.5" y1="409.3" x2="257.5" y2="419.3" stroke="#E03040" stroke-width="1"/><line x1="292.5" y1="415.5" x2="292.5" y2="417" stroke="#E03040" stroke-width="1"/><line x1="355.5" y1="413" x2="355.5" y2="415.5" stroke="#E03040" stroke-width="1"/><line x1="29.5" y1="397.5" x2="363.5" y2="397.5" stroke="#686868" stroke-width="1.1"/><line x1="29.5" y1="415.5" x2="363.5" y2="415.5" stroke="#686868" stroke-width="1.1"/><path d="M29.5 425.5 V303.5 H363.5 V425.5 H29.5" fill="none" stroke="#505050" stroke-width="1.2"/><line x1="24.5" y1="397.0" x2="29.5" y2="397.0" stroke="#505050" stroke-width="1"/><line x1="24.5" y1="378.3" x2="29.5" y2="378.3" stroke="#505050" stroke-width="1"/><line x1="24.5" y1="359.6" x2="29.5" y2="359.6" stroke="#505050" stroke-width="1"/><line x1="24.5" y1="340.9" x2="29.5" y2="340.9" stroke="#505050" stroke-width="1"/><line x1="24.5" y1="322.2" x2="29.5" y2="322.2" stroke="#505050" stroke-width="1"/><line x1="29.9" y1="425.5" x2="29.9" y2="428.0" stroke="#505050" stroke-width="1"/><line x1="35.4" y1="425.5" x2="35.4" y2="428.0" stroke="#505050" stroke-width="1"/><line x1="41.0" y1="425.5" x2="41.0" y2="428.0" stroke="#505050" stroke-width="1"/><line x1="46.5" y1="425.5" x2="46.5" y2="428.0" stroke="#505050" stroke-width="1"/><line x1="52.1" y1="425.5" x2="52.1" y2="428.0" stroke="#505050" stroke-width="1"/><line x1="57.6" y1="425.5" x2="57.6" y2="430.5" stroke="#505050" stroke-width="1"/><line x1="63.1" y1="425.5" x2="63.1" y2="428.0" stroke="#505050" stroke-width="1"/><line x1="68.7" y1="425.5" x2="68.7" y2="428.0" stroke="#505050" stroke-width="1"/><line x1="74.2" y1="425.5" x2="74.2" y2="428.0" stroke="#505050" stroke-width="1"/><line x1="79.8" y1="425.5" x2="79.8" y2="428.0" stroke="#505050" stroke-width="1"/><line x1="85.3" y1="425.5" x2="85.3" y2="428.0" stroke="#505050" stroke-width="1"/><line x1="90.9" y1="425.5" x2="90.9" y2="428.0" stroke="#505050" stroke-width="1"/><line x1="96.5" y1="425.5" x2="96.5" y2="428.0" stroke="#505050" stroke-width="1"/><line x1="102.0" y1="425.5" x2="102.0" y2="428.0" stroke="#505050" stroke-width="1"/><line x1="107.5" y1="425.5" x2="107.5" y2="428.0" stroke="#505050" stroke-width="1"/><line x1="113.1" y1="425.5" x2="113.1" y2="430.5" stroke="#505050" stroke-width="1"/><line x1="118.7" y1="425.5" x2="118.7" y2="428.0" stroke="#505050" stroke-width="1"/><line x1="124.2" y1="425.5" x2="124.2" y2="428.0" stroke="#505050" stroke-width="1"/><line x1="129.8" y1="425.5" x2="129.8" y2="428.0" stroke="#505050" stroke-width="1"/><line x1="135.3" y1="425.5" x2="135.3" y2="428.0" stroke="#505050" stroke-width="1"/><line x1="140.8" y1="425.5" x2="140.8" y2="428.0" stroke="#505050" stroke-width="1"/><line x1="146.4" y1="425.5" x2="146.4" y2="428.0" stroke="#505050" stroke-width="1"/><line x1="151.9" y1="425.5" x2="151.9" y2="428.0" stroke="#505050" stroke-width="1"/><line x1="157.5" y1="425.5" x2="157.5" y2="428.0" stroke="#505050" stroke-width="1"/><line x1="163.1" y1="425.5" x2="163.1" y2="428.0" stroke="#505050" stroke-width="1"/><line x1="168.6" y1="425.5" x2="168.6" y2="430.5" stroke="#505050" stroke-width="1"/><line x1="174.2" y1="425.5" x2="174.2" y2="428.0" stroke="#505050" stroke-width="1"/><line x1="179.7" y1="425.5" x2="179.7" y2="428.0" stroke="#505050" stroke-width="1"/><line x1="185.2" y1="425.5" x2="185.2" y2="428.0" stroke="#505050" stroke-width="1"/><line x1="190.8" y1="425.5" x2="190.8" y2="428.0" stroke="#505050" stroke-width="1"/><line x1="196.3" y1="425.5" x2="196.3" y2="428.0" stroke="#505050" stroke-width="1"/><line x1="201.9" y1="425.5" x2="201.9" y2="428.0" stroke="#505050" stroke-width="1"/><line x1="207.4" y1="425.5" x2="207.4" y2="428.0" stroke="#505050" stroke-width="1"/><line x1="213.0" y1="425.5" x2="213.0" y2="428.0" stroke="#505050" stroke-width="1"/><line x1="218.5" y1="425.5" x2="218.5" y2="428.0" stroke="#505050" stroke-width="1"/><line x1="224.1" y1="425.5" x2="224.1" y2="430.5" stroke="#505050" stroke-width="1"/><line x1="229.6" y1="425.5" x2="229.6" y2="428.0" stroke="#505050" stroke-width="1"/><line x1="235.2" y1="425.5" x2="235.2" y2="428.0" stroke="#505050" stroke-width="1"/><line x1="240.8" y1="425.5" x2="240.8" y2="428.0" stroke="#505050" stroke-width="1"/><line x1="246.3" y1="425.5" x2="246.3" y2="428.0" stroke="#505050" stroke-width="1"/><line x1="251.8" y1="425.5" x2="251.8" y2="428.0" stroke="#505050" stroke-width="1"/><line x1="257.4" y1="425.5" x2="257.4" y2="428.0" stroke="#505050" stroke-width="1"/><line x1="262.9" y1="425.5" x2="262.9" y2="428.0" stroke="#505050" stroke-width="1"/><line x1="268.5" y1="425.5" x2="268.5" y2="428.0" stroke="#505050" stroke-width="1"/><line x1="274.1" y1="425.5" x2="274.1" y2="428.0" stroke="#505050" stroke-width="1"/><line x1="279.6" y1="425.5" x2="279.6" y2="430.5" stroke="#505050" stroke-width="1"/><line x1="285.1" y1="425.5" x2="285.1" y2="428.0" stroke="#505050" stroke-width="1"/><line x1="290.7" y1="425.5" x2="290.7" y2="428.0" stroke="#505050" stroke-width="1"/><line x1="296.2" y1="425.5" x2="296.2" y2="428.0" stroke="#505050" stroke-width="1"/><line x1="301.8" y1="425.5" x2="301.8" y2="428.0" stroke="#505050" stroke-width="1"/><line x1="307.4" y1="425.5" x2="307.4" y2="428.0" stroke="#505050" stroke-width="1"/><line x1="312.9" y1="425.5" x2="312.9" y2="428.0" stroke="#505050" stroke-width="1"/><line x1="318.4" y1="425.5" x2="318.4" y2="428.0" stroke="#505050" stroke-width="1"/><line x1="324.0" y1="425.5" x2="324.0" y2="428.0" stroke="#505050" stroke-width="1"/><line x1="329.6" y1="425.5" x2="329.6" y2="428.0" stroke="#505050" stroke-width="1"/><line x1="335.1" y1="425.5" x2="335.1" y2="430.5" stroke="#505050" stroke-width="1"/><line x1="340.7" y1="425.5" x2="340.7" y2="428.0" stroke="#505050" stroke-width="1"/><line x1="346.2" y1="425.5" x2="346.2" y2="428.0" stroke="#505050" stroke-width="1"/><line x1="351.8" y1="425.5" x2="351.8" y2="428.0" stroke="#505050" stroke-width="1"/><line x1="357.3" y1="425.5" x2="357.3" y2="428.0" stroke="#505050" stroke-width="1"/><line x1="362.9" y1="425.5" x2="362.9" y2="428.0" stroke="#505050" stroke-width="1"/></svg>
<div style="position:absolute;left:23.50px;top:392.80px;font-family:'Liberation Sans';font-size:7px;line-height:8.75px;font-weight:normal;color:#202020;white-space:nowrap;transform:translateX(-100%) scaleX(1.000);transform-origin:100% 50%;">0</div>
<div style="position:absolute;left:23.50px;top:374.10px;font-family:'Liberation Sans';font-size:7px;line-height:8.75px;font-weight:normal;color:#202020;white-space:nowrap;transform:translateX(-100%) scaleX(1.000);transform-origin:100% 50%;">200</div>
<div style="position:absolute;left:23.50px;top:355.40px;font-family:'Liberation Sans';font-size:7px;line-height:8.75px;font-weight:normal;color:#202020;white-space:nowrap;transform:translateX(-100%) scaleX(1.000);transform-origin:100% 50%;">400</div>
<div style="position:absolute;left:23.50px;top:336.70px;font-family:'Liberation Sans';font-size:7px;line-height:8.75px;font-weight:normal;color:#202020;white-space:nowrap;transform:translateX(-100%) scaleX(1.000);transform-origin:100% 50%;">600</div>
<div style="position:absolute;left:23.50px;top:318.00px;font-family:'Liberation Sans';font-size:7px;line-height:8.75px;font-weight:normal;color:#202020;white-space:nowrap;transform:translateX(-100%) scaleX(1.000);transform-origin:100% 50%;">800</div>
<div style="position:absolute;left:57.60px;top:430.60px;font-family:'Liberation Sans';font-size:7px;line-height:8.75px;font-weight:normal;color:#202020;white-space:nowrap;transform:translateX(-50%) scaleX(1.000);transform-origin:50% 50%;">20</div>
<div style="position:absolute;left:113.10px;top:430.60px;font-family:'Liberation Sans';font-size:7px;line-height:8.75px;font-weight:normal;color:#202020;white-space:nowrap;transform:translateX(-50%) scaleX(1.000);transform-origin:50% 50%;">30</div>
<div style="position:absolute;left:168.60px;top:430.60px;font-family:'Liberation Sans';font-size:7px;line-height:8.75px;font-weight:normal;color:#202020;white-space:nowrap;transform:translateX(-50%) scaleX(1.000);transform-origin:50% 50%;">40</div>
<div style="position:absolute;left:224.10px;top:430.60px;font-family:'Liberation Sans';font-size:7px;line-height:8.75px;font-weight:normal;color:#202020;white-space:nowrap;transform:translateX(-50%) scaleX(1.000);transform-origin:50% 50%;">50</div>
<div style="position:absolute;left:279.60px;top:430.60px;font-family:'Liberation Sans';font-size:7px;line-height:8.75px;font-weight:normal;color:#202020;white-space:nowrap;transform:translateX(-50%) scaleX(1.000);transform-origin:50% 50%;">60</div>
<div style="position:absolute;left:335.10px;top:430.60px;font-family:'Liberation Sans';font-size:7px;line-height:8.75px;font-weight:normal;color:#202020;white-space:nowrap;transform:translateX(-50%) scaleX(1.000);transform-origin:50% 50%;">70</div>
<div style="position:absolute;left:20.00px;top:294.40px;font-family:'Liberation Sans';font-size:7px;line-height:8.75px;font-weight:bold;color:#404040;white-space:nowrap;transform:scaleX(0.762);transform-origin:0 50%;">Int.</div>
<div style="position:absolute;left:185.50px;top:438.70px;font-family:'Liberation Sans';font-size:7px;line-height:8.75px;font-weight:bold;color:#404040;white-space:nowrap;transform:scaleX(0.931);transform-origin:0 50%;">2Theta</div>
<div style="position:absolute;left:0px;top:466px;width:639px;height:13px;background:#D4D0C8;"></div>
<div style="position:absolute;left:0px;top:466px;width:639px;height:1px;background:#F0EEEA;"></div>
<div style="position:absolute;left:1.30px;top:468.74px;font-family:'Liberation Sans';font-size:8.3px;line-height:10.38px;font-weight:normal;color:#000;white-space:nowrap;transform:scaleX(0.934);transform-origin:0 50%;">Auto Save completed.</div>
<div style="position:absolute;left:388px;top:467.5px;width:59px;height:12px;background:#D4D0C8;box-sizing:border-box;border-top:1px solid #808080;border-left:1px solid #808080;border-right:1px solid #fff;border-bottom:1px solid #fff;"></div>
<div style="position:absolute;left:389.20px;top:468.74px;font-family:'Liberation Sans';font-size:8.3px;line-height:10.38px;font-weight:normal;color:#000;white-space:nowrap;transform:scaleX(0.923);transform-origin:0 50%;">R-value=19.5%</div>
<div style="position:absolute;left:449px;top:467.5px;width:43.5px;height:12px;background:#D4D0C8;box-sizing:border-box;border-top:1px solid #808080;border-left:1px solid #808080;border-right:1px solid #fff;border-bottom:1px solid #fff;"></div>
<div style="position:absolute;left:450.50px;top:468.74px;font-family:'Liberation Sans';font-size:8.3px;line-height:10.38px;font-weight:normal;color:#000;white-space:nowrap;transform:scaleX(0.887);transform-origin:0 50%;">16 parms</div>
<div style="position:absolute;left:494.5px;top:467.5px;width:45.0px;height:12px;background:#D4D0C8;box-sizing:border-box;border-top:1px solid #808080;border-left:1px solid #808080;border-right:1px solid #fff;border-bottom:1px solid #fff;"></div>
<div style="position:absolute;left:496.30px;top:468.74px;font-family:'Liberation Sans';font-size:8.3px;line-height:10.38px;font-weight:normal;color:#000;white-space:nowrap;transform:scaleX(0.924);transform-origin:0 50%;">132 atoms</div>
<div style="position:absolute;left:541.5px;top:467.5px;width:44.0px;height:12px;background:#D4D0C8;box-sizing:border-box;border-top:1px solid #808080;border-left:1px solid #808080;border-right:1px solid #fff;border-bottom:1px solid #fff;"></div>
<div style="position:absolute;left:541.90px;top:468.74px;font-family:'Liberation Sans';font-size:8.3px;line-height:10.38px;font-weight:normal;color:#000;white-space:nowrap;transform:scaleX(0.923);transform-origin:0 50%;">64 bonds</div>
<div style="position:absolute;left:587.5px;top:467.5px;width:52.0px;height:12px;background:#D4D0C8;box-sizing:border-box;border-top:1px solid #808080;border-left:1px solid #808080;border-right:1px solid #fff;border-bottom:1px solid #fff;"></div>
<div style="position:absolute;left:588.30px;top:468.74px;font-family:'Liberation Sans';font-size:8.3px;line-height:10.38px;font-weight:normal;color:#000;white-space:nowrap;transform:scaleX(0.907);transform-origin:0 50%;">16 polyhedra</div>
<div style="position:absolute;left:0px;top:447px;width:639px;height:19px;background:#D4D0C8;"></div>
<div style="position:absolute;left:4px;top:450px;width:14px;height:13.5px;background:#D4D0C8;box-sizing:border-box;border-top:1px solid #fff;border-left:1px solid #fff;border-right:1px solid #808080;border-bottom:1px solid #808080;"></div>
<svg style="position:absolute;left:4px;top:450px" width="14" height="14" viewBox="0 0 14 14"><circle cx="4.5" cy="4.5" r="2.3" fill="#000"/><circle cx="9.5" cy="4.5" r="2.3" fill="#fff" stroke="#000" stroke-width="0.5"/><circle cx="4.5" cy="9" r="2.3" fill="#fff" stroke="#000" stroke-width="0.5"/><circle cx="9.5" cy="9" r="2.3" fill="#000"/></svg>
<div style="position:absolute;left:18px;top:450px;width:14px;height:13.5px;background:#D4D0C8;box-sizing:border-box;border-top:1px solid #fff;border-left:1px solid #fff;border-right:1px solid #808080;border-bottom:1px solid #808080;"></div>
<svg style="position:absolute;left:18px;top:450px" width="14" height="14" viewBox="0 0 14 14"><circle cx="4.5" cy="4.5" r="2.3" fill="#909090"/><circle cx="9.5" cy="4.5" r="2.3" fill="#909090"/><circle cx="4.5" cy="9" r="2.3" fill="#909090"/><circle cx="9.5" cy="9" r="2.3" fill="#909090"/><rect x="4.5" y="4.5" width="5" height="4.5" fill="#909090"/></svg>
<div style="position:absolute;left:33px;top:450px;width:14px;height:13.5px;background:#D4D0C8;box-sizing:border-box;border-top:1px solid #fff;border-left:1px solid #fff;border-right:1px solid #808080;border-bottom:1px solid #808080;"></div>
<svg style="position:absolute;left:33px;top:450px" width="14" height="14" viewBox="0 0 14 14"><text x="4.5" y="8" font-family="Liberation Sans" font-size="8" fill="#000">?</text><circle cx="4" cy="10" r="1.6" fill="none" stroke="#000" stroke-width="0.7"/><circle cx="10" cy="10" r="1.6" fill="none" stroke="#000" stroke-width="0.7"/></svg>
<div style="position:absolute;left:52px;top:450px;width:14px;height:13.5px;background:#D4D0C8;box-sizing:border-box;border-top:1px solid #fff;border-left:1px solid #fff;border-right:1px solid #808080;border-bottom:1px solid #808080;"></div>
<svg style="position:absolute;left:52px;top:450px" width="14" height="14" viewBox="0 0 14 14"><path d="M2.5 10 Q4 4 8 3 L11 8 L8 11 Z" fill="#F0F040" stroke="#000" stroke-width="0.8"/></svg>
<div style="position:absolute;left:66px;top:450px;width:14px;height:13.5px;background:#D4D0C8;box-sizing:border-box;border-top:1px solid #fff;border-left:1px solid #fff;border-right:1px solid #808080;border-bottom:1px solid #808080;"></div>
<svg style="position:absolute;left:66px;top:450px" width="14" height="14" viewBox="0 0 14 14"><circle cx="5" cy="5" r="2.2" fill="#F0F000" stroke="#606000" stroke-width="0.4"/><circle cx="9.5" cy="5" r="2.2" fill="#F0F000" stroke="#606000" stroke-width="0.4"/><circle cx="5" cy="9.5" r="2.2" fill="#F0F000" stroke="#606000" stroke-width="0.4"/><circle cx="9.5" cy="9.5" r="2.2" fill="#F0F000" stroke="#606000" stroke-width="0.4"/><path d="M1.5 3 H4.5 M3 1.5 V4.5" stroke="#000" stroke-width="0.8"/></svg>
<div style="position:absolute;left:80px;top:450px;width:14px;height:13.5px;background:#D4D0C8;box-sizing:border-box;border-top:1px solid #fff;border-left:1px solid #fff;border-right:1px solid #808080;border-bottom:1px solid #808080;"></div>
<svg style="position:absolute;left:80px;top:450px" width="14" height="14" viewBox="0 0 14 14"><path d="M2 7 H6 M4 5 V9" stroke="#000" stroke-width="1.2"/><circle cx="9.5" cy="7" r="2.6" fill="#F0F000" stroke="#606000" stroke-width="0.4"/></svg>
<div style="position:absolute;left:94px;top:450px;width:14px;height:13.5px;background:#D4D0C8;box-sizing:border-box;border-top:1px solid #fff;border-left:1px solid #fff;border-right:1px solid #808080;border-bottom:1px solid #808080;"></div>
<svg style="position:absolute;left:94px;top:450px" width="14" height="14" viewBox="0 0 14 14"><circle cx="5" cy="8.5" r="2" fill="#F0F000"/><circle cx="9" cy="8.5" r="2" fill="#F0F000"/><circle cx="7" cy="5.5" r="2" fill="#F0F000"/><path d="M2 11.5 H12" stroke="#000" stroke-width="0.8" stroke-dasharray="1,1"/></svg>
<div style="position:absolute;left:115px;top:450px;width:14px;height:13.5px;background:#D4D0C8;box-sizing:border-box;border-top:1px solid #fff;border-left:1px solid #fff;border-right:1px solid #808080;border-bottom:1px solid #808080;"></div>
<svg style="position:absolute;left:115px;top:450px" width="14" height="14" viewBox="0 0 14 14"><circle cx="7" cy="7" r="4.2" fill="#C0C000" stroke="#000" stroke-width="1"/><circle cx="7" cy="7" r="2" fill="#404000"/></svg>
<div style="position:absolute;left:129px;top:450px;width:14px;height:13.5px;background:#D4D0C8;box-sizing:border-box;border-top:1px solid #fff;border-left:1px solid #fff;border-right:1px solid #808080;border-bottom:1px solid #808080;"></div>
<svg style="position:absolute;left:129px;top:450px" width="14" height="14" viewBox="0 0 14 14"><circle cx="7" cy="7" r="4" fill="#E0E0D0" stroke="#B0B0A0" stroke-width="0.6"/><circle cx="7" cy="7" r="2.2" fill="#808000"/></svg>
<div style="position:absolute;left:143px;top:450px;width:14px;height:13.5px;background:#D4D0C8;box-sizing:border-box;border-top:1px solid #fff;border-left:1px solid #fff;border-right:1px solid #808080;border-bottom:1px solid #808080;"></div>
<svg style="position:absolute;left:143px;top:450px" width="14" height="14" viewBox="0 0 14 14"><path d="M4.5 2.5 H9.5 L12 7 L9.5 11.5 H4.5 L2 7 Z" fill="none" stroke="#2030E0" stroke-width="1.2"/></svg>
<div style="position:absolute;left:157px;top:450px;width:14px;height:13.5px;background:#D4D0C8;box-sizing:border-box;border-top:1px solid #fff;border-left:1px solid #fff;border-right:1px solid #808080;border-bottom:1px solid #808080;"></div>
<svg style="position:absolute;left:157px;top:450px" width="14" height="14" viewBox="0 0 14 14"><path d="M4.5 2.5 H9.5 L12 7 L9.5 11.5" fill="none" stroke="#E0E020" stroke-width="1.4"/><path d="M9.5 11.5 H4.5 L2 7 L4.5 2.5" fill="none" stroke="#2030E0" stroke-width="1.2"/></svg>
<div style="position:absolute;left:177px;top:450px;width:14px;height:13.5px;background:#D4D0C8;box-sizing:border-box;border-top:1px solid #fff;border-left:1px solid #fff;border-right:1px solid #808080;border-bottom:1px solid #808080;"></div>
<svg style="position:absolute;left:177px;top:450px" width="14" height="14" viewBox="0 0 14 14"><rect x="3" y="3" width="8" height="8" fill="none" stroke="#3040B0" stroke-width="0.8"/><circle cx="3" cy="3" r="1.4" fill="#3040B0"/><circle cx="11" cy="3" r="1.4" fill="#3040B0"/><circle cx="3" cy="11" r="1.4" fill="#3040B0"/><circle cx="11" cy="11" r="1.4" fill="#3040B0"/><circle cx="7" cy="7" r="1.6" fill="#3040B0"/></svg>
<div style="position:absolute;left:191px;top:450px;width:14px;height:13.5px;background:#D4D0C8;box-sizing:border-box;border-top:1px solid #fff;border-left:1px solid #fff;border-right:1px solid #808080;border-bottom:1px solid #808080;"></div>
<svg style="position:absolute;left:191px;top:450px" width="14" height="14" viewBox="0 0 14 14"><circle cx="7" cy="4" r="1.6" fill="none" stroke="#A0A0A0"/><circle cx="4.5" cy="9.5" r="1.6" fill="none" stroke="#A0A0A0"/><circle cx="9.5" cy="9.5" r="1.6" fill="none" stroke="#A0A0A0"/><path d="M7 5.5 V8 L4.5 9.5 M7 8 L9.5 9.5" stroke="#A0A0A0"/></svg>
<div style="position:absolute;left:210px;top:450px;width:14px;height:13.5px;background:#D4D0C8;box-sizing:border-box;border-top:1px solid #fff;border-left:1px solid #fff;border-right:1px solid #808080;border-bottom:1px solid #808080;"></div>
<svg style="position:absolute;left:210px;top:450px" width="14" height="14" viewBox="0 0 14 14"><rect x="2.5" y="4.5" width="7" height="7" fill="none" stroke="#2030D0" stroke-width="1"/><rect x="4.5" y="2.5" width="7" height="7" fill="none" stroke="#202060" stroke-width="1"/></svg>
<div style="position:absolute;left:224px;top:450px;width:14px;height:13.5px;background:#D4D0C8;box-sizing:border-box;border-top:1px solid #fff;border-left:1px solid #fff;border-right:1px solid #808080;border-bottom:1px solid #808080;"></div>
<svg style="position:absolute;left:224px;top:450px" width="14" height="14" viewBox="0 0 14 14"><path d="M7 2.5 L11.5 7 L7 11.5 L2.5 7 Z" fill="#808080"/></svg>
<div style="position:absolute;left:244px;top:450px;width:14px;height:13.5px;background:#D4D0C8;box-sizing:border-box;border-top:1px solid #fff;border-left:1px solid #fff;border-right:1px solid #808080;border-bottom:1px solid #808080;"></div>
<svg style="position:absolute;left:244px;top:450px" width="14" height="14" viewBox="0 0 14 14"><path d="M2.5 8 Q3 4 7 4 Q11 4 11.5 8 V10 H2.5 Z" fill="none" stroke="#909090" stroke-width="1"/><path d="M3 11 L11 6 M3 6 L11 11" stroke="#909090" stroke-width="0.8"/></svg>
<div style="position:absolute;left:258px;top:450px;width:14px;height:13.5px;background:#D4D0C8;box-sizing:border-box;border-top:1px solid #fff;border-left:1px solid #fff;border-right:1px solid #808080;border-bottom:1px solid #808080;"></div>
<svg style="position:absolute;left:258px;top:450px" width="14" height="14" viewBox="0 0 14 14"><path d="M2.5 8 Q3 4 7 4 Q11 4 11.5 8 V10 H2.5 Z" fill="#308030"/><path d="M2 11.5 L12 3 M2 3 L12 11.5" stroke="#F02020" stroke-width="1.3"/></svg>
<div style="position:absolute;left:272px;top:450px;width:14px;height:13.5px;background:#D4D0C8;box-sizing:border-box;border-top:1px solid #fff;border-left:1px solid #fff;border-right:1px solid #808080;border-bottom:1px solid #808080;"></div>
<svg style="position:absolute;left:272px;top:450px" width="14" height="14" viewBox="0 0 14 14"><path d="M3 5 L7 3 L11 5 L11.5 9 L7 11 L2.5 9 Z" fill="#909090"/></svg>
<div style="position:absolute;left:292px;top:450px;width:14px;height:13.5px;background:#D4D0C8;box-sizing:border-box;border-top:1px solid #fff;border-left:1px solid #fff;border-right:1px solid #808080;border-bottom:1px solid #808080;"></div>
<svg style="position:absolute;left:292px;top:450px" width="14" height="14" viewBox="0 0 14 14"><circle cx="4.5" cy="9.5" r="1.8" fill="#909090"/><path d="M4.5 9.5 L8 5" stroke="#909090"/><text x="7" y="6.5" font-family="Liberation Sans" font-size="5.5" fill="#909090">Fr</text></svg>
<div style="position:absolute;left:306px;top:450px;width:14px;height:13.5px;background:#D4D0C8;box-sizing:border-box;border-top:1px solid #fff;border-left:1px solid #fff;border-right:1px solid #808080;border-bottom:1px solid #808080;"></div>
<svg style="position:absolute;left:306px;top:450px" width="14" height="14" viewBox="0 0 14 14"><text x="2.3" y="11.5" font-family="Liberation Serif" font-weight="bold" font-size="12" fill="#000">T</text></svg>
<div style="position:absolute;left:349px;top:450px;width:14px;height:13.5px;background:#D4D0C8;box-sizing:border-box;border-top:1px solid #fff;border-left:1px solid #fff;border-right:1px solid #808080;border-bottom:1px solid #808080;"></div>
<svg style="position:absolute;left:349px;top:450px" width="14" height="14" viewBox="0 0 14 14"><path d="M7 2.5 V11.5 M2.5 7 H11.5" stroke="#000" stroke-width="1"/><path d="M7 1.5 L8.8 4 H5.2 Z M7 12.5 L5.2 10 H8.8 Z M1.5 7 L4 5.2 V8.8 Z M12.5 7 L10 5.2 V8.8 Z" fill="#000"/><path d="M7 4 L10 7 L7 10 L4 7 Z" fill="none" stroke="#000" stroke-width="0.9"/></svg>
<div style="position:absolute;left:363px;top:450px;width:14px;height:13.5px;background:#D4D0C8;box-sizing:border-box;border-top:1px solid #fff;border-left:1px solid #fff;border-right:1px solid #808080;border-bottom:1px solid #808080;"></div>
<svg style="position:absolute;left:363px;top:450px" width="14" height="14" viewBox="0 0 14 14"><path d="M10.3 5 A3.7 3.7 0 1 0 10.7 8.2" fill="none" stroke="#000" stroke-width="1.3"/><path d="M8.6 3.2 L11.4 3 L11 6 Z" fill="#000"/></svg>
<div style="position:absolute;left:377px;top:450px;width:14px;height:13.5px;background:#D4D0C8;box-sizing:border-box;border-top:1px solid #fff;border-left:1px solid #fff;border-right:1px solid #808080;border-bottom:1px solid #808080;"></div>
<svg style="position:absolute;left:377px;top:450px" width="14" height="14" viewBox="0 0 14 14"><path d="M7 3 V11 M3 7 H11" stroke="#000" stroke-width="1.3"/><path d="M7 1.5 L9 4 H5 Z M7 12.5 L5 10 H9 Z M1.5 7 L4 5 V9 Z M12.5 7 L10 5 V9 Z" fill="#000"/></svg>
<div style="position:absolute;left:391px;top:450px;width:14px;height:13.5px;background:#D4D0C8;box-sizing:border-box;border-top:1px solid #fff;border-left:1px solid #fff;border-right:1px solid #808080;border-bottom:1px solid #808080;"></div>
<svg style="position:absolute;left:391px;top:450px" width="14" height="14" viewBox="0 0 14 14"><rect x="4.5" y="4.5" width="5" height="5" fill="none" stroke="#000" stroke-width="1"/><path d="M2 2 L4 4 M12 2 L10 4 M2 12 L4 10 M12 12 L10 10" stroke="#000" stroke-width="1.2"/></svg>
<div style="position:absolute;left:405px;top:450px;width:14px;height:13.5px;background:#D4D0C8;box-sizing:border-box;border-top:1px solid #fff;border-left:1px solid #fff;border-right:1px solid #808080;border-bottom:1px solid #808080;"></div>
<svg style="position:absolute;left:405px;top:450px" width="14" height="14" viewBox="0 0 14 14"><path d="M12 3.5 L2.5 7.5 L12 10.5" fill="none" stroke="#000" stroke-width="1.1"/><path d="M8.5 5.5 Q10 7.5 8.5 9.2" fill="none" stroke="#000" stroke-width="0.9"/></svg>
<div style="position:absolute;left:426px;top:450px;width:14px;height:13.5px;background:#D4D0C8;box-sizing:border-box;border-top:1px solid #fff;border-left:1px solid #fff;border-right:1px solid #808080;border-bottom:1px solid #808080;"></div>
<svg style="position:absolute;left:426px;top:450px" width="14" height="14" viewBox="0 0 14 14"><text x="2" y="10" font-family="Liberation Sans" font-weight="bold" font-size="9" fill="#202020">R</text><text x="4.5" y="12.5" font-family="Liberation Sans" font-weight="bold" font-size="8.5" fill="#E02020">R</text></svg>
<div style="position:absolute;left:449px;top:450px;width:14px;height:13.5px;background:#D4D0C8;box-sizing:border-box;border-top:1px solid #fff;border-left:1px solid #fff;border-right:1px solid #808080;border-bottom:1px solid #808080;"></div>
<svg style="position:absolute;left:449px;top:450px" width="14" height="14" viewBox="0 0 14 14"><path d="M2.5 3 V11.5 H12 M4.5 6 V11 M6.5 6 V11 M8.5 6 V11 M10.5 6 V11" stroke="#000" stroke-width="0.8" fill="none"/></svg>
<div style="position:absolute;left:463px;top:450px;width:14px;height:13.5px;background:#D4D0C8;box-sizing:border-box;border-top:1px solid #fff;border-left:1px solid #fff;border-right:1px solid #808080;border-bottom:1px solid #808080;"></div>
<svg style="position:absolute;left:463px;top:450px" width="14" height="14" viewBox="0 0 14 14"><path d="M7 2.5 L11.5 11 H2.5 Z" fill="none" stroke="#000" stroke-width="1"/></svg>
<div style="position:absolute;left:477px;top:450px;width:14px;height:13.5px;background:#D4D0C8;box-sizing:border-box;border-top:1px solid #fff;border-left:1px solid #fff;border-right:1px solid #808080;border-bottom:1px solid #808080;"></div>
<svg style="position:absolute;left:477px;top:450px" width="14" height="14" viewBox="0 0 14 14"><circle cx="5.5" cy="8.5" r="2.5" fill="none" stroke="#000" stroke-width="1.1"/><path d="M6.5 6 L9.5 2.5 L11.5 4 L8 7.5" fill="none" stroke="#000" stroke-width="1.1"/></svg>
<div style="position:absolute;left:329px;top:450px;width:14px;height:13.5px;background:#E8E6E0;box-sizing:border-box;border-top:1px solid #808080;border-left:1px solid #808080;border-right:1px solid #fff;border-bottom:1px solid #fff;"></div>
<svg style="position:absolute;left:329px;top:450px" width="14" height="14" viewBox="0 0 14 14"><path d="M5 3 V10.5 L6.8 8.8 L8 11.5 L9 11 L7.8 8.3 H10 Z" fill="#fff" stroke="#404040" stroke-width="0.7"/></svg>
<div style="position:absolute;left:323px;top:447px;width:1px;height:19px;background:#BCB8B0;"></div>
<div style="position:absolute;left:324px;top:447px;width:1px;height:19px;background:#F2F0EC;"></div>
<div style="position:absolute;left:443px;top:447px;width:1px;height:19px;background:#BCB8B0;"></div>
<div style="position:absolute;left:444px;top:447px;width:1px;height:19px;background:#F2F0EC;"></div>
<div style="position:absolute;left:619px;top:43px;width:20px;height:404px;background:#D4D0C8;"></div>
<div style="position:absolute;left:622px;top:48px;width:13.5px;height:12.5px;background:#D4D0C8;box-sizing:border-box;border-top:1px solid #fff;border-left:1px solid #fff;border-right:1px solid #808080;border-bottom:1px solid #808080;"></div>
<svg style="position:absolute;left:622px;top:48px" width="14" height="13" viewBox="0 0 14 13"><path d="M6.8 1.5 L8.5 3.5 H5.1 Z M6.8 11.5 L5.1 9.5 H8.5 Z M1.8 6.5 L3.8 4.8 V8.2 Z M11.8 6.5 L9.8 4.8 V8.2 Z" fill="#000"/><path d="M6.8 3.5 V9.5 M3.8 6.5 H9.8" stroke="#000" stroke-width="0.8"/><circle cx="6.8" cy="6.5" r="1.8" fill="#F0F000"/></svg>
<div style="position:absolute;left:622px;top:61px;width:13.5px;height:12.5px;background:#D4D0C8;box-sizing:border-box;border-top:1px solid #fff;border-left:1px solid #fff;border-right:1px solid #808080;border-bottom:1px solid #808080;"></div>
<svg style="position:absolute;left:622px;top:61px" width="14" height="13" viewBox="0 0 14 13"><rect x="1.5" y="1.5" width="10.5" height="10" fill="#E8E8F8" stroke="#5050E0" stroke-width="1"/><path d="M3 3 L10.5 10 M10.5 3 L3 10" stroke="#000" stroke-width="0.9"/><path d="M2.5 2.5 L5.5 3 L3 5.5 Z M11 2.5 L8 3 L10.5 5.5 Z M2.5 10.5 L5.5 10 L3 7.5 Z M11 10.5 L8 10 L10.5 7.5 Z" fill="#000"/><circle cx="6.8" cy="6.5" r="1.3" fill="#fff"/></svg>
<div style="position:absolute;left:622px;top:74px;width:13.5px;height:12.5px;background:#D4D0C8;box-sizing:border-box;border-top:1px solid #fff;border-left:1px solid #fff;border-right:1px solid #808080;border-bottom:1px solid #808080;"></div>
<svg style="position:absolute;left:622px;top:74px" width="14" height="13" viewBox="0 0 14 13"><rect x="1.5" y="1.5" width="10.5" height="10" fill="#E8E8F8" stroke="#5050E0" stroke-width="1"/><path d="M3 3 L10.5 10 M10.5 3 L3 10" stroke="#000" stroke-width="0.9"/><path d="M2.5 2.5 L5.5 3 L3 5.5 Z M11 2.5 L8 3 L10.5 5.5 Z M2.5 10.5 L5.5 10 L3 7.5 Z M11 10.5 L8 10 L10.5 7.5 Z" fill="#000"/><circle cx="6.8" cy="6.5" r="1.6" fill="#F0F000"/></svg>
<div style="position:absolute;left:622px;top:88px;width:13.5px;height:12.5px;background:#D4D0C8;box-sizing:border-box;border-top:1px solid #fff;border-left:1px solid #fff;border-right:1px solid #808080;border-bottom:1px solid #808080;"></div>
<svg style="position:absolute;left:622px;top:88px" width="14" height="13" viewBox="0 0 14 13"><path d="M6.8 2 L11.5 6.5 L6.8 11 L2 6.5 Z" fill="none" stroke="#2020C0" stroke-width="1.3"/><circle cx="6.8" cy="6.5" r="1.6" fill="none" stroke="#2020C0" stroke-width="0.9"/><circle cx="6.8" cy="2.2" r="1.3" fill="#000"/><circle cx="6.8" cy="10.8" r="1.3" fill="#000"/><circle cx="2.2" cy="6.5" r="1.3" fill="#000"/><circle cx="11.4" cy="6.5" r="1.3" fill="#000"/></svg>
<div style="position:absolute;left:622px;top:104px;width:13.5px;height:12.5px;background:#D4D0C8;box-sizing:border-box;border-top:1px solid #fff;border-left:1px solid #fff;border-right:1px solid #808080;border-bottom:1px solid #808080;"></div>
<svg style="position:absolute;left:622px;top:104px" width="14" height="13" viewBox="0 0 14 13"><path d="M6.5 1.5 V7 L2 10 M6.5 7 L11 10" fill="none" stroke="#404040" stroke-width="0.8"/></svg>
<div style="position:absolute;left:622px;top:116px;width:13.5px;height:12.5px;background:#E8E6E0;box-sizing:border-box;border-top:1px solid #808080;border-left:1px solid #808080;border-right:1px solid #fff;border-bottom:1px solid #fff;"></div>
<svg style="position:absolute;left:622px;top:116px" width="14" height="13" viewBox="0 0 14 13"><circle cx="6.5" cy="3" r="1.6" fill="#0000E0"/><circle cx="3" cy="9.5" r="1.6" fill="#0000E0"/><circle cx="10" cy="9.5" r="1.6" fill="#0000E0"/><path d="M6.5 3 V7 L3 9.5 M6.5 7 L10 9.5" stroke="#0000E0" stroke-width="0.8"/></svg>
<div style="position:absolute;left:622px;top:130px;width:13.5px;height:12.5px;background:#D4D0C8;box-sizing:border-box;border-top:1px solid #fff;border-left:1px solid #fff;border-right:1px solid #808080;border-bottom:1px solid #808080;"></div>
<svg style="position:absolute;left:622px;top:130px" width="14" height="13" viewBox="0 0 14 13"><circle cx="6.5" cy="4.5" r="3" fill="#0000E0"/><circle cx="4" cy="8" r="3" fill="#0000E0"/><circle cx="9" cy="8" r="3" fill="#0000E0"/></svg>
<div style="position:absolute;left:622px;top:146px;width:13.5px;height:12.5px;background:#D4D0C8;box-sizing:border-box;border-top:1px solid #fff;border-left:1px solid #fff;border-right:1px solid #808080;border-bottom:1px solid #808080;"></div>
<svg style="position:absolute;left:622px;top:146px" width="14" height="13" viewBox="0 0 14 13"><rect x="2.5" y="2.5" width="8" height="8" fill="none" stroke="#202020" stroke-width="1"/><rect x="4.5" y="4.5" width="4" height="4" fill="none" stroke="#202020" stroke-width="1"/></svg>
<div style="position:absolute;left:622px;top:158px;width:13.5px;height:12.5px;background:#E8E6E0;box-sizing:border-box;border-top:1px solid #808080;border-left:1px solid #808080;border-right:1px solid #fff;border-bottom:1px solid #fff;"></div>
<svg style="position:absolute;left:622px;top:158px" width="14" height="13" viewBox="0 0 14 13"><circle cx="5" cy="5.5" r="3.5" fill="#0000E0"/><circle cx="8" cy="7.5" r="3.5" fill="#6070D0"/></svg>
<div style="position:absolute;left:622px;top:172px;width:13.5px;height:12.5px;background:#E8E6E0;box-sizing:border-box;border-top:1px solid #808080;border-left:1px solid #808080;border-right:1px solid #fff;border-bottom:1px solid #fff;"></div>
<svg style="position:absolute;left:622px;top:172px" width="14" height="13" viewBox="0 0 14 13"><circle cx="6.5" cy="6.5" r="4.5" fill="#0000E0"/><circle cx="5" cy="5" r="1.2" fill="#fff"/></svg>
<div style="position:absolute;left:622px;top:185px;width:13.5px;height:12.5px;background:#D4D0C8;box-sizing:border-box;border-top:1px solid #fff;border-left:1px solid #fff;border-right:1px solid #808080;border-bottom:1px solid #808080;"></div>
<svg style="position:absolute;left:622px;top:185px" width="14" height="13" viewBox="0 0 14 13"><path d="M2 10 Q4 8 4 3 M5 10 Q5 7 4 3 M7 10 Q9 8 9 3 M10 10 Q10 7 9 3" fill="none" stroke="#505050" stroke-width="0.8"/></svg>
<div style="position:absolute;left:622px;top:202px;width:13.5px;height:12.5px;background:#D4D0C8;box-sizing:border-box;border-top:1px solid #fff;border-left:1px solid #fff;border-right:1px solid #808080;border-bottom:1px solid #808080;"></div>
<svg style="position:absolute;left:622px;top:202px" width="14" height="13" viewBox="0 0 14 13"><path d="M3 2 V10 H11" fill="none" stroke="#404040" stroke-width="0.8"/><circle cx="3" cy="2.5" r="1" fill="#2020E0"/><circle cx="10.5" cy="7" r="1" fill="#2020E0"/><circle cx="3" cy="10" r="1" fill="#2020E0"/></svg>
<div style="position:absolute;left:622px;top:214px;width:13.5px;height:12.5px;background:#D4D0C8;box-sizing:border-box;border-top:1px solid #fff;border-left:1px solid #fff;border-right:1px solid #808080;border-bottom:1px solid #808080;"></div>
<svg style="position:absolute;left:622px;top:214px" width="14" height="13" viewBox="0 0 14 13"><ellipse cx="6.5" cy="6.5" rx="4.5" ry="3.5" fill="#fff" stroke="#000" stroke-width="1"/><path d="M2.5 6.5 Q6.5 4 10.5 6.5 M5 4 Q7 7 8 9.5" fill="none" stroke="#000" stroke-width="0.8"/></svg>
<div style="position:absolute;left:622px;top:228px;width:13.5px;height:12.5px;background:#D4D0C8;box-sizing:border-box;border-top:1px solid #fff;border-left:1px solid #fff;border-right:1px solid #808080;border-bottom:1px solid #808080;"></div>
<svg style="position:absolute;left:622px;top:228px" width="14" height="13" viewBox="0 0 14 13"><path d="M2 4.5 H11 M2 8.5 H11 M4.5 2 V11 M8.5 2 V11" stroke="#B0B0B0" stroke-width="0.8"/></svg>
<div style="position:absolute;left:622px;top:240px;width:13.5px;height:12.5px;background:#D4D0C8;box-sizing:border-box;border-top:1px solid #fff;border-left:1px solid #fff;border-right:1px solid #808080;border-bottom:1px solid #808080;"></div>
<svg style="position:absolute;left:622px;top:240px" width="14" height="13" viewBox="0 0 14 13"><path d="M6.5 2 L11 6.5 L6.5 11 L2 6.5 Z" fill="#fff" stroke="#404040" stroke-width="0.8"/><circle cx="6.5" cy="6.5" r="1.8" fill="#C0C000"/></svg>
<div style="position:absolute;left:622px;top:258px;width:13.5px;height:12.5px;background:#D4D0C8;box-sizing:border-box;border-top:1px solid #fff;border-left:1px solid #fff;border-right:1px solid #808080;border-bottom:1px solid #808080;"></div>
<svg style="position:absolute;left:622px;top:258px" width="14" height="13" viewBox="0 0 14 13"><rect x="2" y="3" width="9" height="7" fill="#fff" stroke="#404040" stroke-width="0.8"/><path d="M3 4 L10 9 M10 4 L3 9" stroke="#E03030" stroke-width="1.2"/><path d="M3 6.5 H10" stroke="#3030E0" stroke-width="1.2"/></svg>
<div style="position:absolute;left:622px;top:270px;width:13.5px;height:12.5px;background:#E8E6E0;box-sizing:border-box;border-top:1px solid #808080;border-left:1px solid #808080;border-right:1px solid #fff;border-bottom:1px solid #fff;"></div>
<svg style="position:absolute;left:622px;top:270px" width="14" height="13" viewBox="0 0 14 13"><path d="M8 2 A5 5 0 1 1 2.5 8 A3.5 3.5 0 1 0 8 2 Z" fill="#0000D0"/></svg>
<div style="position:absolute;left:621px;top:101px;width:15px;height:1px;background:#808080;"></div>
<div style="position:absolute;left:621px;top:102px;width:15px;height:1px;background:#fff;"></div>
<div style="position:absolute;left:621px;top:143px;width:15px;height:1px;background:#808080;"></div>
<div style="position:absolute;left:621px;top:144px;width:15px;height:1px;background:#fff;"></div>
<div style="position:absolute;left:621px;top:198.5px;width:15px;height:1px;background:#808080;"></div>
<div style="position:absolute;left:621px;top:199.5px;width:15px;height:1px;background:#fff;"></div>
<div style="position:absolute;left:621px;top:255px;width:15px;height:1px;background:#808080;"></div>
<div style="position:absolute;left:621px;top:256px;width:15px;height:1px;background:#fff;"></div>
<div style="position:absolute;left:619px;top:297px;width:20px;height:1px;background:#A8A4A0;"></div>
<div style="position:absolute;left:380px;top:315px;width:258px;height:134px;background:#D4D0C8;box-sizing:border-box;border-top:1px solid #D4D0C8;border-left:1px solid #D4D0C8;border-right:1px solid #404040;border-bottom:1px solid #404040;"></div>
<div style="position:absolute;left:381px;top:316px;width:256px;height:132px;box-sizing:border-box;border-top:1px solid #fff;border-left:1px solid #fff;border-right:1px solid #808080;border-bottom:1px solid #808080;"></div>
<div style="position:absolute;left:381px;top:316px;width:255px;height:11px;background:linear-gradient(to right,#808080,#C0C0C0);"></div>
<div style="position:absolute;left:381.80px;top:317.63px;font-family:'Liberation Sans';font-size:8.2px;line-height:10.25px;font-weight:bold;color:#D8D4CC;white-space:nowrap;transform:scaleX(0.969);transform-origin:0 50%;">Structure Solution Progress Viewer</div>
<div style="position:absolute;left:625.5px;top:317.5px;width:10px;height:8.5px;background:#D4D0C8;box-sizing:border-box;border-top:1px solid #fff;border-left:1px solid #fff;border-right:1px solid #404040;border-bottom:1px solid #404040;box-shadow:inset -1px -1px 0 #808080;"></div>
<svg style="position:absolute;left:625.5px;top:317.5px" width="10" height="9" viewBox="0 0 10 9"><path d="M2.8 2 L7.2 6.5 M7.2 2 L2.8 6.5" stroke="#000" stroke-width="1.4"/></svg>
<div style="position:absolute;left:387.50px;top:336.23px;font-family:'Liberation Sans';font-size:8px;line-height:10.00px;font-weight:normal;color:#000;white-space:nowrap;transform:scaleX(0.834);transform-origin:0 50%;">Process/Document:</div>
<div style="position:absolute;left:449px;top:335px;width:126px;height:12.5px;background:#fff;box-sizing:border-box;border-top:1px solid #808080;border-left:1px solid #808080;border-right:1px solid #fff;border-bottom:1px solid #fff;box-shadow:inset 1px 1px 0 #404040;"></div>
<div style="position:absolute;left:451.40px;top:336.23px;font-family:'Liberation Sans';font-size:8px;line-height:10.00px;font-weight:normal;color:#000;white-space:nowrap;transform:scaleX(0.824);transform-origin:0 50%;">na3ps4 (global opt.)</div>
<div style="position:absolute;left:564px;top:337px;width:10px;height:9px;background:#D4D0C8;box-sizing:border-box;border-top:1px solid #fff;border-left:1px solid #fff;border-right:1px solid #404040;border-bottom:1px solid #404040;box-shadow:inset -1px -1px 0 #808080;"></div>
<svg style="position:absolute;left:564px;top:337px" width="10" height="9" viewBox="0 0 10 9"><path d="M2.5 3.2 H7.5 L5 6 Z" fill="#000"/></svg>
<div style="position:absolute;left:387.50px;top:352.43px;font-family:'Liberation Sans';font-size:8px;line-height:10.00px;font-weight:normal;color:#000;white-space:nowrap;transform:scaleX(0.762);transform-origin:0 50%;">Progress:</div>
<svg style="position:absolute;left:387px;top:364px" width="190" height="77" viewBox="0 0 190 77"><rect x="0" y="0" width="190" height="77" fill="#000"/><line x1="1.50" y1="0.5" x2="1.50" y2="75.5" stroke="#007C00" stroke-width="1"/><line x1="10.50" y1="0.5" x2="10.50" y2="75.5" stroke="#007C00" stroke-width="1"/><line x1="20.50" y1="0.5" x2="20.50" y2="75.5" stroke="#007C00" stroke-width="1"/><line x1="29.50" y1="0.5" x2="29.50" y2="75.5" stroke="#007C00" stroke-width="1"/><line x1="38.50" y1="0.5" x2="38.50" y2="75.5" stroke="#007C00" stroke-width="1"/><line x1="48.50" y1="0.5" x2="48.50" y2="75.5" stroke="#007C00" stroke-width="1"/><line x1="57.50" y1="0.5" x2="57.50" y2="75.5" stroke="#007C00" stroke-width="1"/><line x1="67.50" y1="0.5" x2="67.50" y2="75.5" stroke="#007C00" stroke-width="1"/><line x1="76.50" y1="0.5" x2="76.50" y2="75.5" stroke="#007C00" stroke-width="1"/><line x1="85.50" y1="0.5" x2="85.50" y2="75.5" stroke="#007C00" stroke-width="1"/><line x1="95.50" y1="0.5" x2="95.50" y2="75.5" stroke="#007C00" stroke-width="1"/><line x1="104.50" y1="0.5" x2="104.50" y2="75.5" stroke="#007C00" stroke-width="1"/><line x1="113.50" y1="0.5" x2="113.50" y2="75.5" stroke="#007C00" stroke-width="1"/><line x1="123.50" y1="0.5" x2="123.50" y2="75.5" stroke="#007C00" stroke-width="1"/><line x1="132.50" y1="0.5" x2="132.50" y2="75.5" stroke="#007C00" stroke-width="1"/><line x1="142.50" y1="0.5" x2="142.50" y2="75.5" stroke="#007C00" stroke-width="1"/><line x1="151.50" y1="0.5" x2="151.50" y2="75.5" stroke="#007C00" stroke-width="1"/><line x1="160.50" y1="0.5" x2="160.50" y2="75.5" stroke="#007C00" stroke-width="1"/><line x1="170.50" y1="0.5" x2="170.50" y2="75.5" stroke="#007C00" stroke-width="1"/><line x1="179.50" y1="0.5" x2="179.50" y2="75.5" stroke="#007C00" stroke-width="1"/><line x1="189.50" y1="0.5" x2="189.50" y2="75.5" stroke="#007C00" stroke-width="1"/><line x1="0.5" y1="0.5" x2="188.5" y2="0.5" stroke="#008000" stroke-width="1"/><line x1="0.5" y1="9.50" x2="188.5" y2="9.50" stroke="#007C00" stroke-width="1"/><line x1="0.5" y1="16.50" x2="188.5" y2="16.50" stroke="#007C00" stroke-width="1"/><line x1="0.5" y1="23.50" x2="188.5" y2="23.50" stroke="#007C00" stroke-width="1"/><line x1="0.5" y1="29.50" x2="188.5" y2="29.50" stroke="#007C00" stroke-width="1"/><line x1="0.5" y1="36.50" x2="188.5" y2="36.50" stroke="#007C00" stroke-width="1"/><line x1="0.5" y1="42.50" x2="188.5" y2="42.50" stroke="#007C00" stroke-width="1"/><line x1="0.5" y1="49.50" x2="188.5" y2="49.50" stroke="#007C00" stroke-width="1"/><line x1="0.5" y1="56.50" x2="188.5" y2="56.50" stroke="#007C00" stroke-width="1"/><line x1="0.5" y1="62.50" x2="188.5" y2="62.50" stroke="#007C00" stroke-width="1"/><line x1="0.5" y1="69.50" x2="188.5" y2="69.50" stroke="#007C00" stroke-width="1"/><line x1="0.5" y1="76.50" x2="188.5" y2="76.50" stroke="#007C00" stroke-width="1"/><rect x="1.3" y="1" width="155" height="8" fill="#000"/><rect x="1.3" y="16.5" width="61" height="8" fill="#000"/><line x1="0.5" y1="10" x2="0.5" y2="32" stroke="#D8D870" stroke-width="1.2"/><polyline points="1.0,22.0 1.0,26.4 2.5,44.0 4.2,27.8 5.9,47.0 7.2,29.4 8.7,45.9 9.9,29.2 11.1,47.6 12.6,29.0 13.8,49.2 15.5,31.9 16.7,49.0 17.9,32.6 19.0,51.7 20.7,33.3 21.9,50.4 23.5,35.2 25.2,52.5 26.7,36.9 28.4,53.3 30.0,40.3 31.3,54.9 32.5,40.2 33.6,55.8 35.1,41.5 36.6,56.6 37.9,44.4 39.3,57.1 40.7,45.6 41.8,56.6 42.9,46.7 44.5,58.6 46.1,47.8 47.6,59.1 48.7,48.8 50.4,59.4 51.9,51.3 53.6,59.8 54.9,52.2 56.5,60.4 58.0,53.5 59.6,60.8 61.3,54.0 62.6,60.6 64.2,55.2 65.9,61.1 67.2,56.2 68.4,61.7 69.6,57.2 71.3,61.9 72.4,58.3 73.8,62.0 75.1,58.6 76.7,62.1 78.0,58.8 79.7,62.5 81.1,59.6 82.2,62.3 83.9,59.9 85.5,62.7 86.8,60.2 88.5,62.8 89.8,60.9 91.4,62.7 92.8,61.2 94.3,62.9 95.6,61.4 96.8,62.9 98.5,61.7 100.0,62.9 101.3,61.8 102.5,62.9 104.2,62.1 105.7,62.9 107.3,62.3 108.8,63.0 188.6,62.8" fill="none" stroke="#F0F020" stroke-width="1.3" stroke-linejoin="bevel"/></svg>
<div style="position:absolute;left:388.10px;top:364.31px;font-family:'Liberation Sans';font-size:7.5px;line-height:9.38px;font-weight:normal;color:#E8E870;white-space:nowrap;transform:scaleX(0.893);transform-origin:0 50%;">Steps = 995400</div>
<div style="position:absolute;left:443.30px;top:364.31px;font-family:'Liberation Sans';font-size:7.5px;line-height:9.38px;font-weight:normal;color:#E8E870;white-space:nowrap;transform:scaleX(0.845);transform-origin:0 50%;">100 % finished</div>
<div style="position:absolute;left:492.60px;top:364.31px;font-family:'Liberation Sans';font-size:7.5px;line-height:9.38px;font-weight:normal;color:#E8E870;white-space:nowrap;transform:scaleX(0.873);transform-origin:0 50%;">R-value = 19.5 %</div>
<div style="position:absolute;left:388.10px;top:380.01px;font-family:'Liberation Sans';font-size:7.5px;line-height:9.38px;font-weight:normal;color:#E8E870;white-space:nowrap;transform:scaleX(0.849);transform-origin:0 50%;">Optimization finished.</div>
<div style="position:absolute;left:583px;top:364px;width:47px;height:15px;background:#000;"></div>
<div style="position:absolute;left:584px;top:365px;width:45px;height:13px;background:#D4D0C8;box-sizing:border-box;border-top:1px solid #fff;border-left:1px solid #fff;border-right:1px solid #404040;border-bottom:1px solid #404040;box-shadow:inset -1px -1px 0 #808080;"></div>
<div style="position:absolute;left:606.50px;top:367.01px;font-family:'Liberation Sans';font-size:7.5px;line-height:9.38px;font-weight:normal;color:#000;white-space:nowrap;transform:translateX(-50%) scaleX(0.860);transform-origin:50% 50%;">Resume...</div>
<div style="position:absolute;left:583px;top:381.5px;width:47px;height:14px;background:#D4D0C8;box-sizing:border-box;border-top:1px solid #fff;border-left:1px solid #fff;border-right:1px solid #404040;border-bottom:1px solid #404040;box-shadow:inset -1px -1px 0 #808080;"></div>
<div style="position:absolute;left:606.50px;top:384.01px;font-family:'Liberation Sans';font-size:7.5px;line-height:9.38px;font-weight:normal;color:#000;white-space:nowrap;transform:translateX(-50%) scaleX(0.909);transform-origin:50% 50%;">Remove</div>
<div style="position:absolute;left:583px;top:426px;width:47px;height:14px;background:#D4D0C8;box-sizing:border-box;border-top:1px solid #fff;border-left:1px solid #fff;border-right:1px solid #404040;border-bottom:1px solid #404040;box-shadow:inset -1px -1px 0 #808080;"></div>
<div style="position:absolute;left:606.50px;top:428.51px;font-family:'Liberation Sans';font-size:7.5px;line-height:9.38px;font-weight:normal;color:#000;white-space:nowrap;transform:translateX(-50%) scaleX(0.803);transform-origin:50% 50%;">Close</div>
</div></body></html>
